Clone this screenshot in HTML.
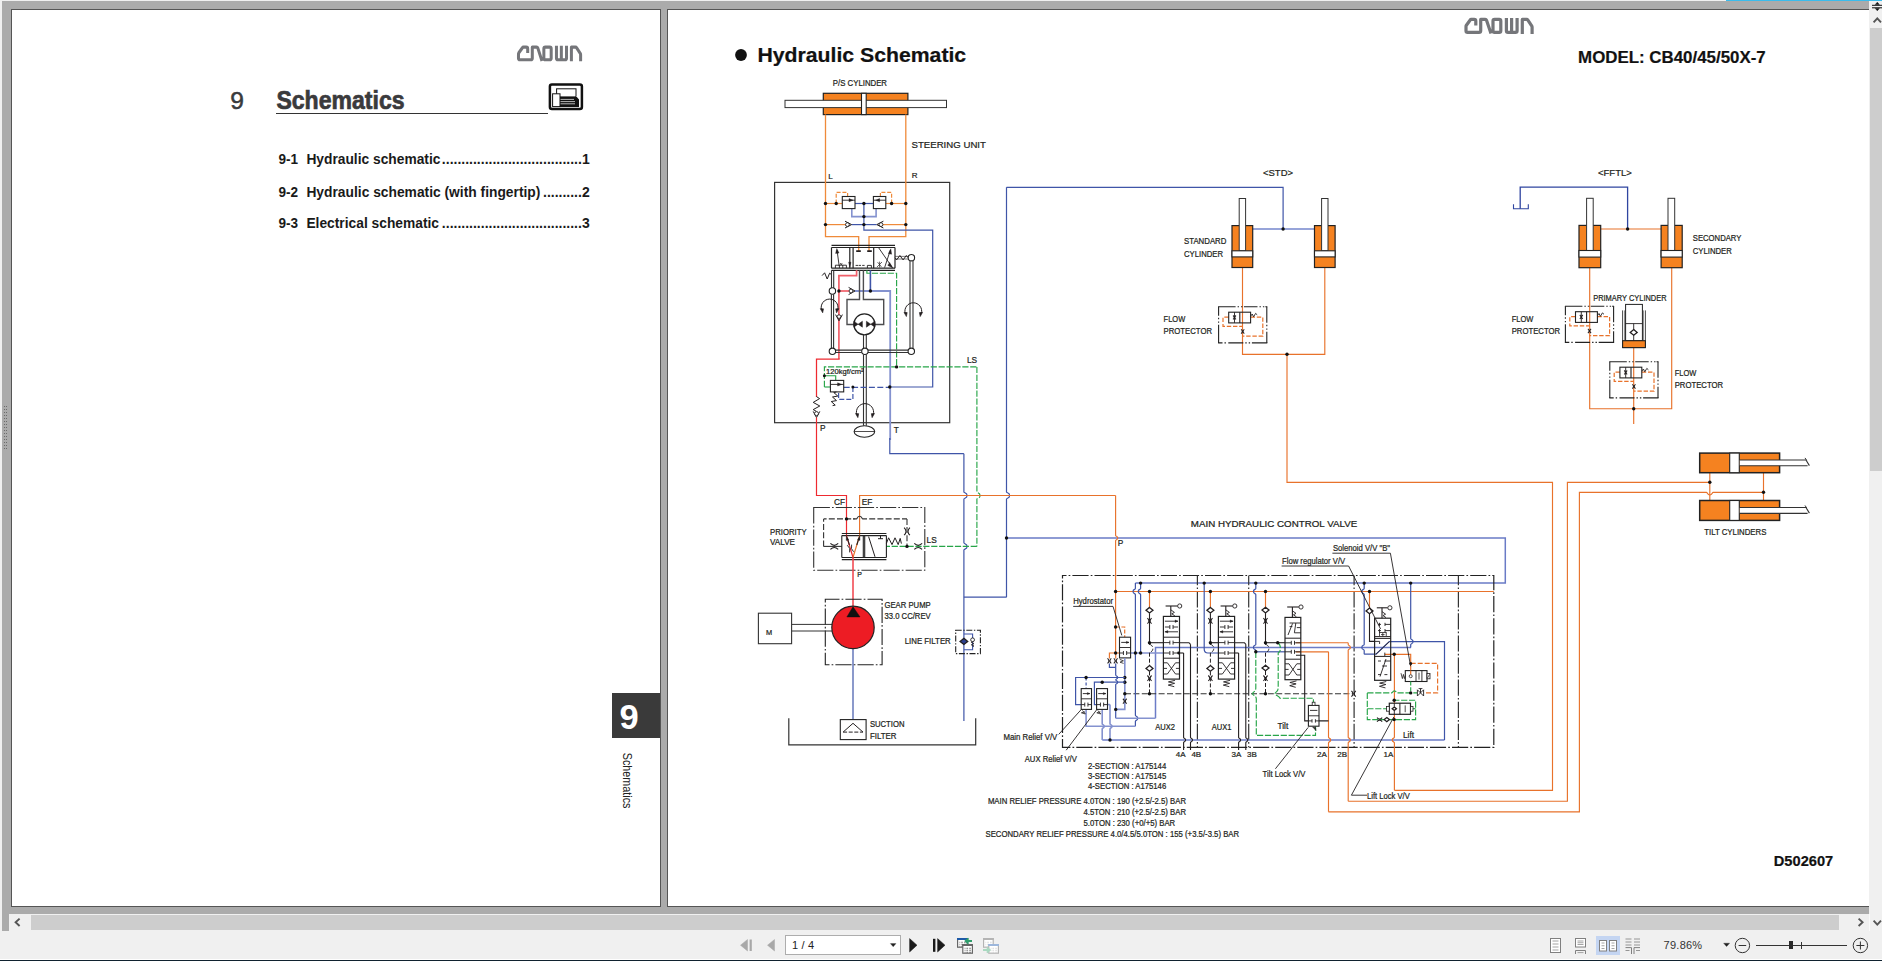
<!DOCTYPE html>
<html>
<head>
<meta charset="utf-8">
<title>Schematics</title>
<style>
html,body{margin:0;padding:0;}
body{width:1882px;height:961px;overflow:hidden;background:#f0f0f0;position:relative;font-family:"Liberation Sans",sans-serif;}
.abs{position:absolute;}
#gray{left:2px;top:1px;width:1867px;height:913px;background:#ababab;}
#grayL{left:2px;top:914px;width:7px;height:17px;background:#ababab;}
#topblue{left:1726px;top:0;width:156px;height:1px;background:#3bbcec;}
#pgL{left:11px;top:9px;width:648px;height:896px;background:#fff;border:1px solid #555;}
#pgR{left:667px;top:9px;width:1202px;height:896px;background:#fff;border:1px solid #555;border-right:none;}
#vsb{left:1869px;top:2px;width:13px;height:929px;background:#f0f0f0;}
#vthumb{left:1870px;top:28px;width:12px;height:443px;background:#cdcdcd;}
#hsb{left:9px;top:914px;width:1860px;height:17px;background:#f0f0f0;}
#hthumb{left:31px;top:915px;width:1808px;height:15px;background:#cdcdcd;}
#botline{left:0;top:959px;width:1882px;height:2px;background:linear-gradient(#ffffff 0,#ffffff 35%,#10222f 60%,#10222f 100%);}
svg text{font-family:"Liberation Sans",sans-serif;}
#sch text{stroke:#231f20;stroke-width:.22px;}
#pagebox{left:785px;top:935px;width:114px;height:18px;background:#fff;border:1px solid #adadad;}
#pagetxt{left:792px;top:938.7px;font-size:11px;color:#222;letter-spacing:0.2px;}
#zoomtxt{left:1663.6px;top:939px;font-size:11px;color:#333;letter-spacing:0.25px;}
#viewhl{left:1596px;top:936px;width:24px;height:19px;background:#c4d5f2;}
</style>
</head>
<body>
<div class="abs" id="gray"></div>
<div class="abs" id="grayL"></div>
<div class="abs" id="topblue"></div>
<div class="abs" id="pgL"></div>
<div class="abs" id="pgR"></div>
<div class="abs" id="vsb"></div>
<div class="abs" id="vthumb"></div>
<div class="abs" id="hsb"></div>
<div class="abs" id="hthumb"></div>
<div class="abs" id="botline"></div>
<div class="abs" id="viewhl"></div>
<div class="abs" id="pagebox"></div>
<div class="abs" id="pagetxt">1 / 4</div>
<div class="abs" id="zoomtxt">79.86%</div>

<!-- chrome icons -->
<svg class="abs" style="left:0;top:0" width="1882" height="961" viewBox="0 0 1882 961" fill="none">
<rect x="4" y="406" width="1" height="1" fill="#6a6a6a"/>
<rect x="6" y="406" width="1" height="1" fill="#6a6a6a"/>
<rect x="4" y="409" width="1" height="1" fill="#6a6a6a"/>
<rect x="6" y="409" width="1" height="1" fill="#6a6a6a"/>
<rect x="4" y="412" width="1" height="1" fill="#6a6a6a"/>
<rect x="6" y="412" width="1" height="1" fill="#6a6a6a"/>
<rect x="4" y="415" width="1" height="1" fill="#6a6a6a"/>
<rect x="6" y="415" width="1" height="1" fill="#6a6a6a"/>
<rect x="4" y="418" width="1" height="1" fill="#6a6a6a"/>
<rect x="6" y="418" width="1" height="1" fill="#6a6a6a"/>
<rect x="4" y="421" width="1" height="1" fill="#6a6a6a"/>
<rect x="6" y="421" width="1" height="1" fill="#6a6a6a"/>
<rect x="4" y="424" width="1" height="1" fill="#6a6a6a"/>
<rect x="6" y="424" width="1" height="1" fill="#6a6a6a"/>
<rect x="4" y="427" width="1" height="1" fill="#6a6a6a"/>
<rect x="6" y="427" width="1" height="1" fill="#6a6a6a"/>
<rect x="4" y="430" width="1" height="1" fill="#6a6a6a"/>
<rect x="6" y="430" width="1" height="1" fill="#6a6a6a"/>
<rect x="4" y="433" width="1" height="1" fill="#6a6a6a"/>
<rect x="6" y="433" width="1" height="1" fill="#6a6a6a"/>
<rect x="4" y="436" width="1" height="1" fill="#6a6a6a"/>
<rect x="6" y="436" width="1" height="1" fill="#6a6a6a"/>
<rect x="4" y="439" width="1" height="1" fill="#6a6a6a"/>
<rect x="6" y="439" width="1" height="1" fill="#6a6a6a"/>
<rect x="4" y="442" width="1" height="1" fill="#6a6a6a"/>
<rect x="6" y="442" width="1" height="1" fill="#6a6a6a"/>
<rect x="4" y="445" width="1" height="1" fill="#6a6a6a"/>
<rect x="6" y="445" width="1" height="1" fill="#6a6a6a"/>
<rect x="4" y="448" width="1" height="1" fill="#6a6a6a"/>
<rect x="6" y="448" width="1" height="1" fill="#6a6a6a"/>
<path d="M19.6 918.6 L15.6 922.3 L19.6 926" stroke="#555" stroke-width="1.9" fill="none"/>
<path d="M1858.6 918.6 L1862.6 922.3 L1858.6 926" stroke="#555" stroke-width="1.9" fill="none"/>
<path d="M1873.6 22.4 L1877.3 18.4 L1881 22.4" stroke="#555" stroke-width="1.9" fill="none"/>
<path d="M1873.6 920.6 L1877.3 924.6 L1881 920.6" stroke="#555" stroke-width="1.9" fill="none"/>
<path d="M1872 5.3 H1882 M1872 7.8 H1882" stroke="#111" stroke-width="1" fill="none"/>
<path d="M1875.3 4.6 L1877.3 2.2 L1879.3 4.6Z" stroke="#111" stroke-width="0.5" fill="#111"/>
<path d="M1875.3 8.4 L1877.3 10.8 L1879.3 8.4Z" stroke="#111" stroke-width="0.5" fill="#111"/>
<rect x="1869" y="914" width="1" height="17" fill="#fafafa"/>
<path d="M747.5 939.5 L740.5 945.2 L747.5 951 Z" stroke="#a8a8a8" stroke-width="0.5" fill="#a8a8a8"/>
<rect x="749.6" y="939.5" width="2.2" height="11.5" fill="#a8a8a8"/>
<path d="M774.5 939.5 L767.5 945.2 L774.5 951 Z" stroke="#a8a8a8" stroke-width="0.5" fill="#a8a8a8"/>
<path d="M909.6 938.6 L917 945.2 L909.6 952 Z" stroke="#1a1a1a" stroke-width="0.5" fill="#1a1a1a"/>
<rect x="933" y="938.8" width="2.4" height="13" fill="#1a1a1a"/>
<path d="M937.6 938.6 L945 945.2 L937.6 952 Z" stroke="#1a1a1a" stroke-width="0.5" fill="#1a1a1a"/>
<path d="M890.4 943.6 L896 943.6 L893.2 946.8Z" stroke="#222" stroke-width="0.3" fill="#222"/>
<rect x="957.6" y="938.6" width="9.6" height="8.6" fill="#fff" stroke="#666" stroke-width="1.2"/>
<rect x="957" y="938" width="10.8" height="2" fill="#1e5aa8"/>
<rect x="959.4" y="941.8" width="0.9" height="0.8" fill="#666"/>
<rect x="961.2" y="941.8" width="1.7" height="0.8" fill="#666"/>
<rect x="964" y="941.8" width="1.7" height="0.8" fill="#666"/>
<rect x="959.4" y="943.8" width="0.9" height="0.8" fill="#666"/>
<rect x="961.2" y="943.8" width="1.7" height="0.8" fill="#666"/>
<rect x="964" y="943.8" width="1.7" height="0.8" fill="#666"/>
<rect x="959.4" y="945.8" width="0.9" height="0.8" fill="#666"/>
<rect x="961.2" y="945.8" width="1.7" height="0.8" fill="#666"/>
<rect x="964" y="945.8" width="1.7" height="0.8" fill="#666"/>
<path d="M972 941 H967 M968.6 938.4 L965.6 941 L968.6 943.6" stroke="#2e9e6b" stroke-width="1.8" fill="none"/>
<rect x="962.8" y="944.6" width="9.6" height="8.6" fill="#fff" stroke="#666" stroke-width="1.2"/>
<rect x="962.2" y="944" width="10.8" height="2" fill="#666"/>
<rect x="964.6" y="947.8" width="0.9" height="0.8" fill="#555"/>
<rect x="966.4" y="947.8" width="1.7" height="0.8" fill="#555"/>
<rect x="969.2" y="947.8" width="1.7" height="0.8" fill="#555"/>
<rect x="964.6" y="949.8" width="0.9" height="0.8" fill="#555"/>
<rect x="966.4" y="949.8" width="1.7" height="0.8" fill="#555"/>
<rect x="969.2" y="949.8" width="1.7" height="0.8" fill="#555"/>
<rect x="964.6" y="951.8" width="0.9" height="0.8" fill="#555"/>
<rect x="966.4" y="951.8" width="1.7" height="0.8" fill="#555"/>
<rect x="969.2" y="951.8" width="1.7" height="0.8" fill="#555"/>
<rect x="983.6" y="938.6" width="9.6" height="8.6" fill="#fff" stroke="#b4b4b4" stroke-width="1.2"/>
<rect x="983" y="938" width="10.8" height="2" fill="#b4b4b4"/>
<rect x="985.4" y="941.8" width="0.9" height="0.8" fill="#d0d0d0"/>
<rect x="987.2" y="941.8" width="1.7" height="0.8" fill="#d0d0d0"/>
<rect x="990" y="941.8" width="1.7" height="0.8" fill="#d0d0d0"/>
<rect x="985.4" y="943.8" width="0.9" height="0.8" fill="#d0d0d0"/>
<rect x="987.2" y="943.8" width="1.7" height="0.8" fill="#d0d0d0"/>
<rect x="990" y="943.8" width="1.7" height="0.8" fill="#d0d0d0"/>
<rect x="985.4" y="945.8" width="0.9" height="0.8" fill="#d0d0d0"/>
<rect x="987.2" y="945.8" width="1.7" height="0.8" fill="#d0d0d0"/>
<rect x="990" y="945.8" width="1.7" height="0.8" fill="#d0d0d0"/>
<rect x="988.8" y="944.6" width="9.6" height="8.6" fill="#fff" stroke="#b4b4b4" stroke-width="1.2"/>
<rect x="988.2" y="944" width="10.8" height="2" fill="#9db7dc"/>
<rect x="990.6" y="947.8" width="0.9" height="0.8" fill="#d0d0d0"/>
<rect x="992.4" y="947.8" width="1.7" height="0.8" fill="#d0d0d0"/>
<rect x="995.2" y="947.8" width="1.7" height="0.8" fill="#d0d0d0"/>
<rect x="990.6" y="949.8" width="0.9" height="0.8" fill="#d0d0d0"/>
<rect x="992.4" y="949.8" width="1.7" height="0.8" fill="#d0d0d0"/>
<rect x="995.2" y="949.8" width="1.7" height="0.8" fill="#d0d0d0"/>
<rect x="990.6" y="951.8" width="0.9" height="0.8" fill="#d0d0d0"/>
<rect x="992.4" y="951.8" width="1.7" height="0.8" fill="#d0d0d0"/>
<rect x="995.2" y="951.8" width="1.7" height="0.8" fill="#d0d0d0"/>
<path d="M983 950 H988.6 M986.8 947.4 L989.8 950 L986.8 952.6" stroke="#a9d8c0" stroke-width="1.8" fill="none"/>
<rect x="1550.5" y="938.5" width="10" height="14" fill="#fff" stroke="#808080" stroke-width="1"/>
<line x1="1552.5" y1="941" x2="1558.5" y2="941" stroke="#9a9a9a" stroke-width="0.9"/>
<line x1="1552.5" y1="944" x2="1558.5" y2="944" stroke="#9a9a9a" stroke-width="0.9"/>
<line x1="1552.5" y1="947" x2="1558.5" y2="947" stroke="#9a9a9a" stroke-width="0.9"/>
<line x1="1552.5" y1="950" x2="1558.5" y2="950" stroke="#9a9a9a" stroke-width="0.9"/>
<rect x="1575.5" y="938.5" width="10" height="8.5" fill="#fff" stroke="#808080" stroke-width="1"/>
<line x1="1577.5" y1="941" x2="1583.5" y2="941" stroke="#9a9a9a" stroke-width="0.9"/>
<line x1="1577.5" y1="942.75" x2="1583.5" y2="942.75" stroke="#9a9a9a" stroke-width="0.9"/>
<line x1="1577.5" y1="944.5" x2="1583.5" y2="944.5" stroke="#9a9a9a" stroke-width="0.9"/>
<path d="M1575.5 954 V950.5 H1585.5 V954" stroke="#808080" stroke-width="1" fill="none"/>
<path d="M1577.5 952.6 H1583.5" stroke="#9a9a9a" stroke-width="0.9" fill="none"/>
<rect x="1599.5" y="940.5" width="7" height="10.5" fill="#fff" stroke="#808080" stroke-width="1"/>
<line x1="1601.5" y1="943" x2="1604.5" y2="943" stroke="#9a9a9a" stroke-width="0.9"/>
<line x1="1601.5" y1="945.75" x2="1604.5" y2="945.75" stroke="#9a9a9a" stroke-width="0.9"/>
<line x1="1601.5" y1="948.5" x2="1604.5" y2="948.5" stroke="#9a9a9a" stroke-width="0.9"/>
<rect x="1609.5" y="940.5" width="7" height="10.5" fill="#fff" stroke="#808080" stroke-width="1"/>
<line x1="1611.5" y1="943" x2="1614.5" y2="943" stroke="#9a9a9a" stroke-width="0.9"/>
<line x1="1611.5" y1="945.75" x2="1614.5" y2="945.75" stroke="#9a9a9a" stroke-width="0.9"/>
<line x1="1611.5" y1="948.5" x2="1614.5" y2="948.5" stroke="#9a9a9a" stroke-width="0.9"/>
<path d="M1625.5 939 H1631.5 M1625.5 942 H1631.5 M1625.5 945 H1631.5" stroke="#8a8a8a" stroke-width="0.9" fill="none"/>
<path d="M1634 939 H1640 M1634 942 H1640 M1634 945 H1640" stroke="#8a8a8a" stroke-width="0.9" fill="none"/>
<path d="M1625.5 947.6 H1631.5 V954 M1640 947.6 H1634 V954" stroke="#808080" stroke-width="1" fill="none"/>
<path d="M1625.5 950.5 H1629.5 M1636 950.5 H1640" stroke="#8a8a8a" stroke-width="0.9" fill="none"/>
<path d="M1723.6 943.2 L1729.6 943.2 L1726.6 946.6Z" stroke="#222" stroke-width="0.3" fill="#222"/>
<circle cx="1742.4" cy="945.5" r="7.2" fill="#f0f0f0" stroke="#333" stroke-width="1"/>
<path d="M1738.6 945.5 H1746.2" stroke="#333" stroke-width="1" fill="none"/>
<circle cx="1860.4" cy="945.5" r="7.2" fill="#f0f0f0" stroke="#333" stroke-width="1"/>
<path d="M1856.4 945.5 H1864.4 M1860.4 941.5 V949.5" stroke="#333" stroke-width="1" fill="none"/>
<path d="M1756 945.5 H1847" stroke="#333" stroke-width="1.2" fill="none"/>
<rect x="1789" y="941" width="4" height="8" fill="#2a2a2a"/>
<path d="M1801.5 942 V949" stroke="#333" stroke-width="1" fill="none"/>
</svg>

<!-- left page content -->
<svg class="abs" style="left:0;top:0" width="1882" height="961" viewBox="0 0 1882 961" fill="none">
<g transform="translate(516.6,45.8) scale(0.94,0.97)"><path d="M11.8 7.4 V3 Q11.8 1.4 10.2 1.4 H7.2 Q6.6 1.4 6.2 2 L2.4 7.2 Q2 7.8 2 8.6 V12.8 Q2 14.4 3.6 14.4 H15 Q16.7 14.4 16.7 12.8 V1.4 H21.2 Q22.2 1.4 22.6 2.4 L27 15.6 M30.6 1.4 H35.2 Q36.8 1.4 36.8 3 V12.8 Q36.8 14.4 35.2 14.4 H30.6 Q29 14.4 29 12.8 V3 Q29 1.4 30.6 1.4 Z M42.4 0 V12.8 Q42.4 14.4 44 14.4 H51.5 Q53.1 14.4 53.1 12.8 V0 M47.6 0 V14.4 M58.3 15.9 V1.4 H62.6 Q63.4 1.4 63.9 2.1 L67.7 7.9 Q68.1 8.5 68.1 9.2 V15.9" stroke="#75767a" stroke-width="3.2" fill="none" stroke-linejoin="round"/></g>
<g transform="translate(1464,18) scale(1,1)"><path d="M11.8 7.4 V3 Q11.8 1.4 10.2 1.4 H7.2 Q6.6 1.4 6.2 2 L2.4 7.2 Q2 7.8 2 8.6 V12.8 Q2 14.4 3.6 14.4 H15 Q16.7 14.4 16.7 12.8 V1.4 H21.2 Q22.2 1.4 22.6 2.4 L27 15.6 M30.6 1.4 H35.2 Q36.8 1.4 36.8 3 V12.8 Q36.8 14.4 35.2 14.4 H30.6 Q29 14.4 29 12.8 V3 Q29 1.4 30.6 1.4 Z M42.4 0 V12.8 Q42.4 14.4 44 14.4 H51.5 Q53.1 14.4 53.1 12.8 V0 M47.6 0 V14.4 M58.3 15.9 V1.4 H62.6 Q63.4 1.4 63.9 2.1 L67.7 7.9 Q68.1 8.5 68.1 9.2 V15.9" stroke="#75767a" stroke-width="3.2" fill="none" stroke-linejoin="round"/></g>
<text x="230.3" y="108.8" font-size="24.6" fill="#3a3a3c" stroke="#3a3a3c" stroke-width="0.5">9</text>
<text x="276.4" y="108.8" font-size="26" fill="#3a3a3c" textLength="128.2" lengthAdjust="spacingAndGlyphs" font-weight="bold" stroke="#3a3a3c" stroke-width="0.7">Schematics</text>
<path d="M276 113.5 H548" stroke="#333" stroke-width="1.1" fill="none"/>
<rect x="549.9" y="84.5" width="32" height="24.4" rx="2" ry="2" fill="#fff" stroke="#111" stroke-width="2.5"/>
<rect x="556.6" y="88.8" width="19.4" height="12" fill="#fff" stroke="#111" stroke-width="1"/>
<rect x="559" y="96.4" width="20" height="10.6" fill="#111"/>
<path d="M560 99.4 H574 M560 101.6 H575 M560 103.8 H575" stroke="#fff" stroke-width="0.7"/>
<path d="M573 96 L576 96 L579 99.4 L579 96 Z" fill="#fff"/>
<rect x="552.6" y="93.8" width="7.4" height="12.8" fill="#fff" stroke="#111" stroke-width="1"/>
<text x="278.5" y="163.9" font-size="14" fill="#1a1a1a" stroke="none" textLength="19.6" lengthAdjust="spacingAndGlyphs" font-weight="bold" >9-1</text>
<text x="306.4" y="163.9" font-size="14" fill="#1a1a1a" stroke="none" textLength="134" lengthAdjust="spacingAndGlyphs" font-weight="bold" >Hydraulic schematic</text>
<text x="589.7" y="163.9" font-size="14" fill="#1a1a1a" stroke="none" font-weight="bold" text-anchor="end" >....................................1</text>
<text x="278.5" y="197.2" font-size="14" fill="#1a1a1a" stroke="none" textLength="19.6" lengthAdjust="spacingAndGlyphs" font-weight="bold" >9-2</text>
<text x="306.4" y="197.2" font-size="14" fill="#1a1a1a" stroke="none" textLength="234" lengthAdjust="spacingAndGlyphs" font-weight="bold" >Hydraulic schematic (with fingertip)</text>
<text x="589.7" y="197.2" font-size="14" fill="#1a1a1a" stroke="none" font-weight="bold" text-anchor="end" >..........2</text>
<text x="278.5" y="227.6" font-size="14" fill="#1a1a1a" stroke="none" textLength="19.6" lengthAdjust="spacingAndGlyphs" font-weight="bold" >9-3</text>
<text x="306.4" y="227.6" font-size="14" fill="#1a1a1a" stroke="none" textLength="132.6" lengthAdjust="spacingAndGlyphs" font-weight="bold" >Electrical schematic</text>
<text x="589.7" y="227.6" font-size="14" fill="#1a1a1a" stroke="none" font-weight="bold" text-anchor="end" >....................................3</text>
<rect x="612" y="693" width="48" height="45" fill="#3a3a3a"/>
<text x="619.4" y="729.2" font-size="34.5" fill="#fff" stroke="none" font-weight="bold" >9</text>
<g transform="translate(622.6,752.8) rotate(90)"><text x="0" y="0" font-size="12" fill="#222" textLength="55.6" lengthAdjust="spacingAndGlyphs">Schematics</text></g>
</svg>

<!-- right page schematic -->
<svg id="sch" class="abs" style="left:0;top:0" width="1882" height="961" viewBox="0 0 1882 961" fill="none" stroke-linecap="butt" stroke-linejoin="miter">
<circle cx="741" cy="55" r="5.9" fill="#111"/>
<text x="757.4" y="61.9" font-size="19.8" fill="#111" stroke="none" textLength="208.8" lengthAdjust="spacingAndGlyphs" font-weight="bold" >Hydraulic Schematic</text>
<text x="1578.1" y="63" font-size="17" fill="#111" stroke="none" textLength="187.6" lengthAdjust="spacingAndGlyphs" font-weight="bold" >MODEL: CB40/45/50X-7</text>
<text x="1773.8" y="865.8" font-size="14.5" fill="#111" stroke="none" textLength="59.4" lengthAdjust="spacingAndGlyphs" font-weight="bold" >D502607</text>
<text x="832.8" y="85.9" font-size="8.3" fill="#231f20" stroke="none" textLength="54.2" lengthAdjust="spacingAndGlyphs" >P/S CYLINDER</text>
<rect x="823.3" y="93.3" width="84.6" height="21.3" fill="#f58220" stroke="#222" stroke-width="1.2"/>
<rect x="785" y="100.3" width="161.5" height="7.3" fill="#fff" stroke="#333" stroke-width="1"/>
<rect x="861.5" y="93.3" width="4.7" height="21.3" fill="#fff" stroke="#222" stroke-width="1.1"/>
<text x="911.5" y="148.2" font-size="9.6" fill="#231f20" stroke="none" textLength="74.4" lengthAdjust="spacingAndGlyphs" >STEERING UNIT</text>
<text x="828.2" y="179" font-size="8" fill="#231f20" stroke="none" >L</text>
<text x="911.7" y="178.2" font-size="8" fill="#231f20" stroke="none" >R</text>
<rect x="774.6" y="182.4" width="175.1" height="240.3" fill="none" stroke="#333" stroke-width="1.2"/>
<polyline points="825.5,114.6 825.5,236.6 858.7,236.6 858.7,250.9" stroke="#ef8a3a" stroke-width="1.3" />
<polyline points="905.8,114.6 905.8,236.6 869,236.6 869,250.9" stroke="#ef8a3a" stroke-width="1.3" />
<polyline points="825.5,203.5 842.3,203.5" stroke="#ef8a3a" stroke-width="1.2" />
<polyline points="885.8,203.5 905.8,203.5" stroke="#ef8a3a" stroke-width="1.2" />
<polyline points="855,203.5 873.4,203.5" stroke="#3f55a8" stroke-width="1.2" />
<polyline points="836.2,203.5 836.2,192.3 847.6,192.3 847.6,196.5" stroke="#ef8a3a" stroke-width="1.2" stroke-dasharray="4 1.8" />
<polyline points="891.6,203.5 891.6,192.3 880.4,192.3 880.4,196.5" stroke="#ef8a3a" stroke-width="1.2" stroke-dasharray="4 1.8" />
<polyline points="851.8,208.6 851.8,216.6 876.1,216.6 876.1,208.6" stroke="#8492cf" stroke-width="1.6" />
<polyline points="863.9,203.5 863.9,230.2 932.7,230.2 932.7,387 889.8,387" stroke="#3f55a8" stroke-width="1.2" />
<rect x="842.3" y="196.5" width="12.7" height="12.1" fill="#fff" stroke="#222" stroke-width="1.1"/>
<rect x="873.4" y="196.5" width="12.4" height="12.1" fill="#fff" stroke="#222" stroke-width="1.1"/>
<polyline points="842.3,200.2 855,200.2" stroke="#231f20" stroke-width="0.9" />
<polyline points="873.4,200.2 885.8,200.2" stroke="#231f20" stroke-width="0.9" />
<path d="M849 198.6 L853 200.2 L849 201.8Z" stroke="#231f20" stroke-width="0.4" fill="#231f20"/>
<path d="M879.6 198.6 L875.6 200.2 L879.6 201.8Z" stroke="#231f20" stroke-width="0.4" fill="#231f20"/>
<circle cx="825.5" cy="203.5" r="1.7" fill="#111" stroke="none"/>
<circle cx="836.2" cy="203.5" r="1.7" fill="#111" stroke="none"/>
<circle cx="863.9" cy="203.5" r="1.7" fill="#111" stroke="none"/>
<circle cx="891.6" cy="203.5" r="1.7" fill="#111" stroke="none"/>
<circle cx="905.8" cy="203.5" r="1.7" fill="#111" stroke="none"/>
<circle cx="863.9" cy="216.6" r="1.7" fill="#111" stroke="none"/>
<polyline points="825.5,224.6 846,224.6" stroke="#ef8a3a" stroke-width="1.2" />
<polyline points="883,224.6 905.8,224.6" stroke="#ef8a3a" stroke-width="1.2" />
<polyline points="851.8,224.6 876.6,224.6" stroke="#3f55a8" stroke-width="1.2" />
<path d="M845 221.2 L851.6 224.6 L845 228" stroke="#231f20" stroke-width="1" fill="none"/>
<circle cx="847.4" cy="224.6" r="1.9" fill="#fff" stroke="#231f20" stroke-width="0.9"/>
<path d="M883.4 221.2 L876.8 224.6 L883.4 228" stroke="#231f20" stroke-width="1" fill="none"/>
<circle cx="881" cy="224.6" r="1.9" fill="#fff" stroke="#231f20" stroke-width="0.9"/>
<circle cx="825.5" cy="224.6" r="1.7" fill="#111" stroke="none"/>
<circle cx="863.9" cy="224.6" r="1.7" fill="#111" stroke="none"/>
<circle cx="905.8" cy="224.6" r="1.7" fill="#111" stroke="none"/>
<path d="M831.5 245.4 H895 M831.5 247.5 H895 M831.5 268.2 H895 M831.5 270.3 H895" stroke="#222" stroke-width="1.2" fill="none"/>
<path d="M831.5 247.5 V268.2 M895 247.5 V268.2 M849.8 247.5 V268.2 M853.1 247.5 V268.2 M873.7 247.5 V268.2" stroke="#222" stroke-width="1.2" fill="none"/>
<polyline points="839.2,266 837,250" stroke="#231f20" stroke-width="0.9" />
<path d="M835.6 253.4 L836.8 248.6 L839 253Z" stroke="#231f20" stroke-width="0.4" fill="#231f20"/>
<path d="M848.6 262.2 L849.8 267 L851 262.2Z" stroke="#231f20" stroke-width="0.4" fill="#231f20"/>
<path d="M835.4 268 V265.2 H846.4 V268 M839.4 265.2 V268 M842.8 265.2 V268" stroke="#231f20" stroke-width="0.9" fill="none"/>
<path d="M840 263 L842.4 265.4 M842.4 263 L840 265.4" stroke="#231f20" stroke-width="0.7" fill="none"/>
<path d="M856.2 251.1 H860.8 M867.2 251.1 H871.8" stroke="#231f20" stroke-width="1.6" fill="none"/>
<path d="M855.6 265.4 H858 M858.6 265.4 H861 M862.2 265.4 H864.6 M867.4 265.4 H871.4 V268 M867.4 265.4 V268" stroke="#231f20" stroke-width="0.9" fill="none"/>
<polyline points="878.8,248 892.4,267.6" stroke="#231f20" stroke-width="0.9" />
<polyline points="890.4,250 884.6,267.6" stroke="#231f20" stroke-width="0.9" />
<path d="M888.4 253.6 L890.8 248.8 L891.6 254.2Z" stroke="#231f20" stroke-width="0.4" fill="#231f20"/>
<path d="M889.6 262.4 L892.6 267.8 L887.8 265.4Z" stroke="#231f20" stroke-width="0.4" fill="#231f20"/>
<path d="M877 267 L882 262 M877.6 262.2 L881.4 266.8 M879.6 261.6 V267.4" stroke="#231f20" stroke-width="0.7" fill="none"/>
<polyline points="895,257.7 896.62,259.9 899.88,255.5 903.12,259.9 906.38,255.5 908,257.7" stroke="#231f20" stroke-width="1" />
<path d="M895 256.4 H908 M895 259 H908" stroke="#231f20" stroke-width="0.6" fill="none"/>
<circle cx="911.4" cy="257.7" r="3.2" fill="#fff" stroke="#222" stroke-width="1.1"/>
<path d="M910 261 V348.2 M913 261 V348.2" stroke="#333" stroke-width="1.1" fill="none"/>
<polyline points="822.1,275.6 824.6,272.8 827.2,279 829.6,273.2 831.5,274.6" stroke="#231f20" stroke-width="1" />
<path d="M831.5 270.3 V288 M833.7 270.3 V288 M831.4 294.2 V348.2 M833.6 294.2 V348.2" stroke="#333" stroke-width="1.1" fill="none"/>
<polyline points="856.6,270.3 856.6,275.7 838.9,275.7 838.9,359.1" stroke="#f0606a" stroke-width="1.7" />
<polyline points="839.7,359.1 816.5,359.1 816.5,397" stroke="#ee2a30" stroke-width="1.25" />
<polyline points="838.9,291 849,291" stroke="#f0606a" stroke-width="1.7" />
<polyline points="854.8,291 890.2,291 890.2,440" stroke="#8492cf" stroke-width="1.8" />
<polyline points="870.4,270.3 870.4,291" stroke="#3f55a8" stroke-width="1.6" />
<path d="M848.6 287.4 L855 291 L848.6 294.6" stroke="#231f20" stroke-width="1" fill="none"/>
<circle cx="851" cy="291" r="1.9" fill="#fff" stroke="#231f20" stroke-width="0.9"/>
<polyline points="866.9,270.3 866.9,273.2 896.6,273.2 896.6,366.9" stroke="#27a548" stroke-width="1.15" stroke-dasharray="6.2 1.7" />
<polyline points="859.5,270.3 859.5,299.5 847,299.5 847,324.5 854,324.5" stroke="#4d4d4f" stroke-width="1.4" />
<polyline points="863.4,270.3 863.4,299.5 883.7,299.5 883.7,324.5 874.8,324.5" stroke="#4d4d4f" stroke-width="1.4" />
<circle cx="838.9" cy="291" r="1.7" fill="#111" stroke="none"/>
<circle cx="870.4" cy="291" r="1.7" fill="#111" stroke="none"/>
<circle cx="832.4" cy="291" r="3.2" fill="#fff" stroke="#222" stroke-width="1.1"/>
<path d="M835.6 314.6 L839 320.8 L842.4 314.6" stroke="#231f20" stroke-width="1" fill="none"/>
<circle cx="839" cy="316.6" r="1.8" fill="#fff" stroke="#231f20" stroke-width="0.9"/>
<circle cx="864.4" cy="324.3" r="10.5" fill="#fff" stroke="#222" stroke-width="1.3"/>
<path d="M853.8 321.2 L862.4 327.2 V321.2 L853.8 327.2Z M866.4 321.2 L875 327.2 V321.2 L866.4 327.2Z" stroke="#231f20" stroke-width="0.5" fill="#231f20"/>
<path d="M863.5 334.8 V348.2 M866.3 334.8 V348.2 M863.5 354.4 V425.8 M866.3 354.4 V425.8" stroke="#333" stroke-width="1.1" fill="none"/>
<path d="M835.4 350.1 H861.8 M835.4 352.5 H861.8 M868 350.1 H908 M868 352.5 H908" stroke="#333" stroke-width="1.1" fill="none"/>
<circle cx="832.4" cy="351.3" r="3.2" fill="#fff" stroke="#222" stroke-width="1.1"/>
<circle cx="864.9" cy="351.3" r="3.2" fill="#fff" stroke="#222" stroke-width="1.1"/>
<circle cx="911.3" cy="351.3" r="3.2" fill="#fff" stroke="#222" stroke-width="1.1"/>
<ellipse cx="864.4" cy="431.5" rx="10.3" ry="5.8" fill="#fff" stroke="#222" stroke-width="1.1"/>
<path d="M854.2 431.5 H874.6" stroke="#231f20" stroke-width="0.8" fill="none"/>
<path d="M821.49 309.67 A8.4 8.4 0 1 1 837.71 309.67" stroke="#231f20" stroke-width="1" fill="none"/>
<path d="M822.69 312.87 l-2.4 -4.2 l3.2 0.2Z" stroke="#231f20" stroke-width="0.6" fill="#231f20"/>
<path d="M836.51 312.87 l2.4 -4.2 l-3.2 0.2Z" stroke="#231f20" stroke-width="0.6" fill="#231f20"/>
<path d="M905.19 313.37 A8.4 8.4 0 1 1 921.41 313.37" stroke="#231f20" stroke-width="1" fill="none"/>
<path d="M906.39 316.57 l-2.4 -4.2 l3.2 0.2Z" stroke="#231f20" stroke-width="0.6" fill="#231f20"/>
<path d="M920.21 316.57 l2.4 -4.2 l-3.2 0.2Z" stroke="#231f20" stroke-width="0.6" fill="#231f20"/>
<path d="M856.69 414.43 A8.6 8.6 0 1 1 873.31 414.43" stroke="#231f20" stroke-width="1" fill="none"/>
<path d="M857.89 417.63 l-2.4 -4.2 l3.2 0.2Z" stroke="#231f20" stroke-width="0.6" fill="#231f20"/>
<path d="M872.11 417.63 l2.4 -4.2 l-3.2 0.2Z" stroke="#231f20" stroke-width="0.6" fill="#231f20"/>
<polyline points="824.4,387 824.4,366.9 976.9,366.9" stroke="#27a548" stroke-width="1.15" stroke-dasharray="6.2 1.7" />
<polyline points="824.4,387 830.4,387" stroke="#27a548" stroke-width="1.15" />
<polyline points="824.4,375.7 835.7,375.7 835.7,380.4" stroke="#27a548" stroke-width="1.15" />
<circle cx="896.6" cy="366.9" r="1.7" fill="#111" stroke="none"/>
<circle cx="824.4" cy="375.7" r="1.5" fill="#111" stroke="none"/>
<text x="826" y="374" font-size="7.4" fill="#231f20" stroke="none" textLength="37.6" lengthAdjust="spacingAndGlyphs" >120kgf/cm²</text>
<text x="966.9" y="362.9" font-size="8.3" fill="#231f20" stroke="none" >LS</text>
<polyline points="843.7,387.4 889.8,387.4" stroke="#3f55a8" stroke-width="1.2" stroke-dasharray="6 2.4" />
<polyline points="852.9,387 852.9,399.4 838.6,399.4 838.6,391.9" stroke="#3f55a8" stroke-width="1.2" stroke-dasharray="5 2" />
<rect x="830.4" y="380.4" width="13.3" height="11.5" fill="#fff" stroke="#222" stroke-width="1.1"/>
<polyline points="830.4,384.4 843.7,384.4" stroke="#231f20" stroke-width="0.9" />
<path d="M837.6 382.8 L841.6 384.4 L837.6 386Z" stroke="#231f20" stroke-width="0.4" fill="#231f20"/>
<circle cx="852.9" cy="387" r="1.5" fill="#111" stroke="none"/>
<circle cx="889.8" cy="387" r="1.7" fill="#111" stroke="none"/>
<polyline points="836.4,392 833.77,392.49 837.76,396.05 832.51,397.02 836.49,400.58 831.24,401.55 835.23,405.11 832.6,405.6" stroke="#231f20" stroke-width="1" />
<polyline points="816.5,396.6 819.6,398.6 813.2,402.4 819.8,406 813.2,409.6 816.5,411.4" stroke="#231f20" stroke-width="1" />
<path d="M813.2 411.4 L816.5 417.6 L819.8 411.4" stroke="#231f20" stroke-width="1" fill="none"/>
<circle cx="816.5" cy="413.6" r="2" fill="#fff" stroke="#231f20" stroke-width="0.9"/>
<text x="820" y="430.6" font-size="8.3" fill="#231f20" stroke="none" >P</text>
<text x="893.7" y="432.8" font-size="8.3" fill="#231f20" stroke="none" >T</text>
<polyline points="816.5,417.4 816.5,495.5 846.5,495.5 846.5,535.6" stroke="#ee2a30" stroke-width="1.2" />
<polyline points="889.8,438 889.8,453.7 963.9,453.7" stroke="#3f55a8" stroke-width="1.2" />
<path d="M963.9 453.7 L963.9 491.9 C963.9 493.1 967.1 492.5 967.1 495.5 C967.1 498.5 963.9 497.9 963.9 499.1 L963.9 542.8 C963.9 544 967.1 543.4 967.1 546.4 C967.1 549.4 963.9 548.8 963.9 550 L963.9 721" stroke="#3f55a8" stroke-width="1.2" fill="none"/>
<path d="M976.9 366.9 L976.9 491.9 C976.9 493.1 980.1 492.5 980.1 495.5 C980.1 498.5 976.9 497.9 976.9 499.1 L976.9 546.4" stroke="#27a548" stroke-width="1.15" fill="none" stroke-dasharray="6.2 1.7"/>
<polyline points="976.9,546.4 886.4,546.4" stroke="#27a548" stroke-width="1.15" stroke-dasharray="6.2 1.7" />
<polyline points="1283.1,229 1283.1,187.3 1006.5,187.3" stroke="#3f55a8" stroke-width="1.2" />
<path d="M1006.5 187.3 L1006.5 491.9 C1006.5 493.1 1009.7 492.5 1009.7 495.5 C1009.7 498.5 1006.5 497.9 1006.5 499.1 L1006.5 597.2" stroke="#3f55a8" stroke-width="1.2" fill="none"/>
<polyline points="1006.5,597.2 963.9,597.2" stroke="#3f55a8" stroke-width="1.2" />
<polyline points="1006.5,538 1505.3,538 1505.3,583.1 1135.4,583.1" stroke="#6a7bc6" stroke-width="1.5" />
<circle cx="1006.5" cy="538" r="1.7" fill="#111" stroke="none"/>
<polyline points="859.6,535.5 859.6,495.5 1115.6,495.5" stroke="#e8722b" stroke-width="1.15" />
<path d="M1115.6 495.5 L1115.6 535.4 C1115.6 536.6 1117.8 536 1117.8 538 C1117.8 540 1115.6 539.4 1115.6 540.6 L1115.6 653.6" stroke="#e8722b" stroke-width="1.15" fill="none"/>
<text x="833.9" y="505.2" font-size="8.3" fill="#231f20" stroke="none" >CF</text>
<text x="861.8" y="505.2" font-size="8.3" fill="#231f20" stroke="none" >EF</text>
<text x="1117.7" y="545.6" font-size="8.3" fill="#231f20" stroke="none" >P</text>
<rect x="813.7" y="507.5" width="111.1" height="62.7" fill="none" stroke="#333" stroke-width="1.1" stroke-dasharray="16.2 2.1 1.7 2.1" stroke-dashoffset="0"/>
<polyline points="823.6,546.4 823.6,518.9" stroke="#333" stroke-width="1.1" stroke-dasharray="6 2.2" />
<polyline points="823.6,518.9 854.6,518.9" stroke="#333" stroke-width="1.1" stroke-dasharray="6 2.2" stroke-dashoffset="3" />
<path d="M853 518.9 H856.4 C857.4 518.9 857.2 516.2 859.6 516.2 C862 516.2 861.8 518.9 862.8 518.9 H865" stroke="#333" stroke-width="1.1" fill="none"/>
<polyline points="865,518.9 907,518.9" stroke="#333" stroke-width="1.1" stroke-dasharray="6 2.2" stroke-dashoffset="4" />
<polyline points="907,518.9 907,546.4" stroke="#333" stroke-width="1.1" stroke-dasharray="6 2.2" />
<polyline points="823.6,546.4 841.8,546.4" stroke="#333" stroke-width="1.1" />
<path d="M830.4 543.4 Q834.3 547.3 838.2 543.4 M830.4 549.4 Q834.3 545.5 838.2 549.4" stroke="#231f20" stroke-width="1.1" fill="none"/>
<path d="M904.1 527.63 Q907.9 531.4 904.1 535.17 M909.9 527.63 Q906.1 531.4 909.9 535.17" stroke="#231f20" stroke-width="1.1" fill="none"/>
<path d="M914.3 543.4 Q918.2 547.3 922.1 543.4 M914.3 549.4 Q918.2 545.5 922.1 549.4" stroke="#231f20" stroke-width="1.1" fill="none"/>
<circle cx="846.5" cy="518.9" r="1.7" fill="#111" stroke="none"/>
<circle cx="907" cy="546.4" r="1.7" fill="#111" stroke="none"/>
<path d="M841.8 533.5 H886.4 M841.8 535.6 H886.4 M841.8 557.5 H886.4 M841.8 559.6 H886.4 M841.8 535.6 V557.5 M886.4 535.6 V557.5 M863.3 535.6 V557.5 M864.7 535.6 V557.5" stroke="#222" stroke-width="1.1" fill="none"/>
<polyline points="846.5,535.6 853,557.5" stroke="#ee2a30" stroke-width="1.2" />
<polyline points="859.6,535.6 853,557.5" stroke="#e8722b" stroke-width="1.2" />
<polyline points="847.4,538.4 849.4,545" stroke="#231f20" stroke-width="1.1" />
<polyline points="858.8,538.4 856.8,545" stroke="#231f20" stroke-width="1.1" />
<path d="M846.4 535.8 l2.2 4 l-2.4 0.6Z M859.8 535.8 l-2.2 4 l2.4 0.6Z" stroke="#231f20" stroke-width="0.4" fill="#231f20"/>
<path d="M847.2 545.2 Q851 548 849.6 552.4 M851.6 544.6 Q850.4 549 853.6 551.8" stroke="#231f20" stroke-width="0.9" fill="none"/>
<polyline points="868.6,536.6 875,556.8" stroke="#231f20" stroke-width="1" />
<path d="M878 538.7 H883 M880.5 536 V538.7" stroke="#231f20" stroke-width="1" fill="none"/>
<polyline points="886.4,543.4 888.6,537.8 892,544.6 895,537.8 898.2,544.6 900.2,538.4 901.4,543.6" stroke="#231f20" stroke-width="1" />
<text x="926.6" y="542.8" font-size="8.3" fill="#231f20" stroke="none" >LS</text>
<text x="770" y="535.2" font-size="8.4" fill="#231f20" stroke="none" textLength="36.6" lengthAdjust="spacingAndGlyphs" >PRIORITY</text>
<text x="770" y="545.2" font-size="8.4" fill="#231f20" stroke="none" textLength="25" lengthAdjust="spacingAndGlyphs" >VALVE</text>
<text x="857.2" y="576.6" font-size="7" fill="#231f20" stroke="none" >P</text>
<polyline points="853,557.5 853,606.4" stroke="#f0404a" stroke-width="1.5" />
<rect x="825.3" y="599.3" width="56.8" height="65.4" fill="none" stroke="#222" stroke-width="1.1" stroke-dasharray="16.2 2.1 1.7 2.1" stroke-dashoffset="2"/>
<polyline points="853,648 853,719.6" stroke="#3f55a8" stroke-width="1.2" />
<path d="M791.6 624.4 H832.6 M791.6 631 H832.6" stroke="#333" stroke-width="1" fill="none"/>
<circle cx="853" cy="627.4" r="21.2" fill="#ed1c24" stroke="#222" stroke-width="1.2"/>
<path d="M853 606.8 L846.9 616.9 L860 616.9Z" stroke="#111" stroke-width="0.5" fill="#111"/>
<rect x="758.4" y="613.2" width="33.2" height="30.5" fill="#fff" stroke="#333" stroke-width="1.1"/>
<text x="765.9" y="634.7" font-size="7.4" fill="#231f20" stroke="none" >M</text>
<text x="884.5" y="608.1" font-size="8.3" fill="#231f20" stroke="none" textLength="46.2" lengthAdjust="spacingAndGlyphs" >GEAR PUMP</text>
<text x="884.5" y="619.1" font-size="8.3" fill="#231f20" stroke="none" textLength="46.2" lengthAdjust="spacingAndGlyphs" >33.0 CC/REV</text>
<rect x="840.3" y="719.6" width="25.8" height="20" fill="#fff" stroke="#222" stroke-width="1.1"/>
<polyline points="843.1,732.1 853,723.3 863,732.1" stroke="#231f20" stroke-width="1" />
<polyline points="843.1,732.1 863,732.1" stroke="#231f20" stroke-width="1" stroke-dasharray="4 1.6" />
<text x="869.9" y="726.5" font-size="8.3" fill="#231f20" stroke="none" textLength="34.6" lengthAdjust="spacingAndGlyphs" >SUCTION</text>
<text x="869.9" y="739.2" font-size="8.3" fill="#231f20" stroke="none" textLength="26.6" lengthAdjust="spacingAndGlyphs" >FILTER</text>
<polyline points="788.8,718.3 788.8,744.9 975.7,744.9 975.7,718.3" stroke="#333" stroke-width="1.2" />
<polyline points="963.9,634 972.6,634 972.6,649.7 963.9,649.7" stroke="#3f55a8" stroke-width="1.1" />
<rect x="955.7" y="630.2" width="24.7" height="23.4" fill="none" stroke="#222" stroke-width="1.1" stroke-dasharray="6 1.6 1.4 1.6"/>
<path d="M963.9 638.34 L967.71 641.4 L963.9 644.46 L960.09 641.4Z" stroke="#231f20" stroke-width="1.3" fill="#2b3f8f"/>
<circle cx="972.6" cy="639.8" r="1.9" fill="#fff" stroke="#231f20" stroke-width="0.9"/>
<polyline points="972.6,641.8 971.2,642.4 974,643.6 971.2,644.8 974,646 972.6,646.6" stroke="#231f20" stroke-width="0.8" />
<text x="904.7" y="644.1" font-size="8.3" fill="#231f20" stroke="none" textLength="46.1" lengthAdjust="spacingAndGlyphs" >LINE FILTER</text>
<text x="1263" y="176.3" font-size="9" fill="#231f20" stroke="none" textLength="30" lengthAdjust="spacingAndGlyphs" >&lt;STD&gt;</text>
<polyline points="1252.7,229 1314.5,229" stroke="#7586cc" stroke-width="1.3" />
<circle cx="1283.1" cy="229" r="1.7" fill="#111" stroke="none"/>
<polyline points="1242.5,267.5 1242.5,354.3 1324.8,354.3 1324.8,267.5" stroke="#e8722b" stroke-width="1.15" />
<rect x="1232" y="225.6" width="20.7" height="41.9" fill="#f58220" stroke="#222" stroke-width="1.2"/>
<rect x="1239.2" y="198.5" width="6.4" height="52.3" fill="#fff" stroke="#333" stroke-width="1"/>
<rect x="1232" y="250.8" width="20.7" height="6.1" fill="#fff" stroke="#222" stroke-width="1.1"/>
<rect x="1314.5" y="225.6" width="20.6" height="41.9" fill="#f58220" stroke="#222" stroke-width="1.2"/>
<rect x="1321.6" y="198.5" width="6.4" height="52.3" fill="#fff" stroke="#333" stroke-width="1"/>
<rect x="1314.5" y="250.8" width="20.6" height="6.1" fill="#fff" stroke="#222" stroke-width="1.1"/>
<text x="1184" y="243.9" font-size="8.3" fill="#231f20" stroke="none" textLength="42.4" lengthAdjust="spacingAndGlyphs" >STANDARD</text>
<text x="1184" y="256.9" font-size="8.3" fill="#231f20" stroke="none" textLength="39" lengthAdjust="spacingAndGlyphs" >CYLINDER</text>
<polyline points="1218.1,306.8 1267.3,306.8" stroke="#222" stroke-width="1.1" stroke-dasharray="17.5 2 1.4 2 1.4 1.6 13.5 2 1.4 2 1.4 1 4" />
<polyline points="1218.1,342.9 1267.3,342.9" stroke="#222" stroke-width="1.1" stroke-dasharray="4.4 2 1.4 2.4 15 2 1.4 2 1.4 1.8 20" />
<polyline points="1218.6,306.8 1218.6,342.9" stroke="#222" stroke-width="1.1" stroke-dasharray="9 2 1.4 2.2 1.4 2 20" />
<polyline points="1266.8,306.8 1266.8,342.9" stroke="#222" stroke-width="1.1" stroke-dasharray="16 2 1.4 2.2 1.4 2 14" />
<polyline points="1228.7,317.2 1223,317.2 1223,326.3 1242.7,326.3" stroke="#e8722b" stroke-width="1.2" stroke-dasharray="4.4 1.8" />
<polyline points="1250.6,317.2 1262.8,317.2 1262.8,336.2 1242.7,336.2" stroke="#e8722b" stroke-width="1.2" stroke-dasharray="4.4 1.8" />
<rect x="1228.7" y="312.2" width="21.9" height="10.7" fill="none" stroke="#222" stroke-width="1.1"/>
<polyline points="1234.5,312.2 1234.5,322.9" stroke="#231f20" stroke-width="0.9" />
<polyline points="1239.8,312.2 1239.8,322.9" stroke="#231f20" stroke-width="1.1" />
<path d="M1233 315.45 Q1235.4 317.4 1233 319.35 M1236 315.45 Q1233.6 317.4 1236 319.35" stroke="#231f20" stroke-width="1.1" fill="none"/>
<path d="M1241.1 329.42 Q1243.6 331.5 1241.1 333.58 M1244.3 329.42 Q1241.8 331.5 1244.3 333.58" stroke="#231f20" stroke-width="1.1" fill="none"/>
<polyline points="1250.6,316.2 1252.2,314 1253.6,316.8 1255.6,313.4 1257.2,314.8" stroke="#231f20" stroke-width="0.9" />
<text x="1163.6" y="321.8" font-size="8.3" fill="#231f20" stroke="none" textLength="21.6" lengthAdjust="spacingAndGlyphs" >FLOW</text>
<text x="1163.6" y="333.9" font-size="8.3" fill="#231f20" stroke="none" textLength="48.4" lengthAdjust="spacingAndGlyphs" >PROTECTOR</text>
<polyline points="1287,354.3 1287,482.3 1552.5,482.3 1552.5,790.3 1394.4,790.3" stroke="#e8722b" stroke-width="1.15" />
<circle cx="1287" cy="354.3" r="1.7" fill="#111" stroke="none"/>
<text x="1598" y="175.6" font-size="9" fill="#231f20" stroke="none" textLength="33.8" lengthAdjust="spacingAndGlyphs" >&lt;FFTL&gt;</text>
<polyline points="1520.2,208.8 1520.2,187.2 1627.6,187.2 1627.6,229" stroke="#2f45a0" stroke-width="1.3" />
<polyline points="1513.5,204.3 1513.5,208.8 1528.3,208.8 1528.3,204.3" stroke="#2f45a0" stroke-width="1.1" />
<polyline points="1600.7,229 1661.1,229" stroke="#e8722b" stroke-width="1.15" />
<circle cx="1627.6" cy="229" r="1.7" fill="#111" stroke="none"/>
<polyline points="1589.7,267.7 1589.7,408.7 1671.7,408.7 1671.7,267.7" stroke="#e8722b" stroke-width="1.15" />
<polyline points="1633.7,347.6 1633.7,424" stroke="#e8722b" stroke-width="1.15" />
<rect x="1579" y="225.4" width="21.7" height="42.3" fill="#f58220" stroke="#222" stroke-width="1.2"/>
<rect x="1586.6" y="198.3" width="6.6" height="52.2" fill="#fff" stroke="#333" stroke-width="1"/>
<rect x="1579" y="250.5" width="21.7" height="6.6" fill="#fff" stroke="#222" stroke-width="1.1"/>
<rect x="1661.1" y="225.4" width="21.1" height="42.3" fill="#f58220" stroke="#222" stroke-width="1.2"/>
<rect x="1668" y="198.3" width="6.7" height="52.2" fill="#fff" stroke="#333" stroke-width="1"/>
<rect x="1661.1" y="250.5" width="21.1" height="6.6" fill="#fff" stroke="#222" stroke-width="1.1"/>
<text x="1692.8" y="241.2" font-size="8.3" fill="#231f20" stroke="none" textLength="48.6" lengthAdjust="spacingAndGlyphs" >SECONDARY</text>
<text x="1692.8" y="254.2" font-size="8.3" fill="#231f20" stroke="none" textLength="39" lengthAdjust="spacingAndGlyphs" >CYLINDER</text>
<text x="1593.2" y="300.9" font-size="8.3" fill="#231f20" stroke="none" textLength="73.4" lengthAdjust="spacingAndGlyphs" >PRIMARY CYLINDER</text>
<path d="M1622.6 310.4 V347.6 H1645.4 V310.4 M1624.9 310.4 V340.7 M1643.1 310.4 V340.7" stroke="#333" stroke-width="0.9" fill="none"/>
<rect x="1625.6" y="304.4" width="16.8" height="36.3" fill="#fff" stroke="#222" stroke-width="1"/>
<rect x="1622.6" y="340.7" width="22.8" height="6.9" fill="#f58220" stroke="#222" stroke-width="1.1"/>
<polyline points="1625.6,323.6 1642.4,323.6" stroke="#231f20" stroke-width="0.9" />
<polyline points="1633.7,323.6 1633.7,340.7" stroke="#231f20" stroke-width="0.9" />
<path d="M1633.7 329.61 L1637.17 332.4 L1633.7 335.19 L1630.23 332.4Z" stroke="#231f20" stroke-width="1.3" fill="#fff"/>
<polyline points="1564.9,306.3 1614.1,306.3" stroke="#222" stroke-width="1.1" stroke-dasharray="17.5 2 1.4 2 1.4 1.6 13.5 2 1.4 2 1.4 1 4" />
<polyline points="1564.9,342.4 1614.1,342.4" stroke="#222" stroke-width="1.1" stroke-dasharray="4.4 2 1.4 2.4 15 2 1.4 2 1.4 1.8 20" />
<polyline points="1565.4,306.3 1565.4,342.4" stroke="#222" stroke-width="1.1" stroke-dasharray="9 2 1.4 2.2 1.4 2 20" />
<polyline points="1613.6,306.3 1613.6,342.4" stroke="#222" stroke-width="1.1" stroke-dasharray="16 2 1.4 2.2 1.4 2 14" />
<polyline points="1575.5,316.7 1569.8,316.7 1569.8,325.8 1589.5,325.8" stroke="#e8722b" stroke-width="1.2" stroke-dasharray="4.4 1.8" />
<polyline points="1597.4,316.7 1609.6,316.7 1609.6,335.7 1589.5,335.7" stroke="#e8722b" stroke-width="1.2" stroke-dasharray="4.4 1.8" />
<rect x="1575.5" y="311.7" width="21.9" height="10.7" fill="none" stroke="#222" stroke-width="1.1"/>
<polyline points="1581.3,311.7 1581.3,322.4" stroke="#231f20" stroke-width="0.9" />
<polyline points="1586.6,311.7 1586.6,322.4" stroke="#231f20" stroke-width="1.1" />
<path d="M1579.8 314.95 Q1582.2 316.9 1579.8 318.85 M1582.8 314.95 Q1580.4 316.9 1582.8 318.85" stroke="#231f20" stroke-width="1.1" fill="none"/>
<path d="M1587.9 328.92 Q1590.4 331 1587.9 333.08 M1591.1 328.92 Q1588.6 331 1591.1 333.08" stroke="#231f20" stroke-width="1.1" fill="none"/>
<polyline points="1597.4,315.7 1599,313.5 1600.4,316.3 1602.4,312.9 1604,314.3" stroke="#231f20" stroke-width="0.9" />
<polyline points="1609.3,361.8 1658.5,361.8" stroke="#222" stroke-width="1.1" stroke-dasharray="17.5 2 1.4 2 1.4 1.6 13.5 2 1.4 2 1.4 1 4" />
<polyline points="1609.3,397.9 1658.5,397.9" stroke="#222" stroke-width="1.1" stroke-dasharray="4.4 2 1.4 2.4 15 2 1.4 2 1.4 1.8 20" />
<polyline points="1609.8,361.8 1609.8,397.9" stroke="#222" stroke-width="1.1" stroke-dasharray="9 2 1.4 2.2 1.4 2 20" />
<polyline points="1658,361.8 1658,397.9" stroke="#222" stroke-width="1.1" stroke-dasharray="16 2 1.4 2.2 1.4 2 14" />
<polyline points="1619.9,372.2 1614.2,372.2 1614.2,381.3 1633.9,381.3" stroke="#e8722b" stroke-width="1.2" stroke-dasharray="4.4 1.8" />
<polyline points="1641.8,372.2 1654,372.2 1654,391.2 1633.9,391.2" stroke="#e8722b" stroke-width="1.2" stroke-dasharray="4.4 1.8" />
<rect x="1619.9" y="367.2" width="21.9" height="10.7" fill="none" stroke="#222" stroke-width="1.1"/>
<polyline points="1625.7,367.2 1625.7,377.9" stroke="#231f20" stroke-width="0.9" />
<polyline points="1631,367.2 1631,377.9" stroke="#231f20" stroke-width="1.1" />
<path d="M1624.2 370.45 Q1626.6 372.4 1624.2 374.35 M1627.2 370.45 Q1624.8 372.4 1627.2 374.35" stroke="#231f20" stroke-width="1.1" fill="none"/>
<path d="M1632.3 384.42 Q1634.8 386.5 1632.3 388.58 M1635.5 384.42 Q1633 386.5 1635.5 388.58" stroke="#231f20" stroke-width="1.1" fill="none"/>
<polyline points="1641.8,371.2 1643.4,369 1644.8,371.8 1646.8,368.4 1648.4,369.8" stroke="#231f20" stroke-width="0.9" />
<text x="1511.7" y="322" font-size="8.3" fill="#231f20" stroke="none" textLength="21.6" lengthAdjust="spacingAndGlyphs" >FLOW</text>
<text x="1511.7" y="334.1" font-size="8.3" fill="#231f20" stroke="none" textLength="48.4" lengthAdjust="spacingAndGlyphs" >PROTECTOR</text>
<text x="1674.7" y="376.3" font-size="8.3" fill="#231f20" stroke="none" textLength="21.6" lengthAdjust="spacingAndGlyphs" >FLOW</text>
<text x="1674.7" y="388.4" font-size="8.3" fill="#231f20" stroke="none" textLength="48.4" lengthAdjust="spacingAndGlyphs" >PROTECTOR</text>
<circle cx="1633.7" cy="408.7" r="1.7" fill="#111" stroke="none"/>
<polyline points="1709.8,472.7 1709.8,500.5" stroke="#e8722b" stroke-width="1.15" />
<polyline points="1763.5,472.7 1763.5,500.5" stroke="#e8722b" stroke-width="1.15" />
<rect x="1699.7" y="453.1" width="79.9" height="19.6" fill="#f58220" stroke="#222" stroke-width="1.5"/>
<rect x="1729.7" y="453.1" width="9.6" height="19.6" fill="#fff" stroke="#222" stroke-width="1.1"/>
<rect x="1739.8" y="460" width="66" height="5.8" fill="#fff" stroke="none"/>
<path d="M1739.3 460 H1806 l3.4 5.6 M1739.3 465.8 H1807.6" stroke="#333" stroke-width="1.1" fill="none"/>
<path d="M1805 457.9 l1.6 2.4" stroke="#333" stroke-width="1" fill="none"/>
<rect x="1699.7" y="500.5" width="79.9" height="19.9" fill="#f58220" stroke="#222" stroke-width="1.5"/>
<rect x="1729.7" y="500.5" width="9.6" height="19.9" fill="#fff" stroke="#222" stroke-width="1.1"/>
<rect x="1739.8" y="507.55" width="66" height="5.8" fill="#fff" stroke="none"/>
<path d="M1739.3 507.55 H1806 l3.4 5.6 M1739.3 513.35 H1807.6" stroke="#333" stroke-width="1.1" fill="none"/>
<path d="M1805 505.45 l1.6 2.4" stroke="#333" stroke-width="1" fill="none"/>
<text x="1704.2" y="534.9" font-size="8.3" fill="#231f20" stroke="none" textLength="62.2" lengthAdjust="spacingAndGlyphs" >TILT CYLINDERS</text>
<polyline points="1348.2,801.2 1567.4,801.2 1567.4,482.3 1709.8,482.3" stroke="#e8722b" stroke-width="1.15" />
<path d="M1328.4 811.8 H1579.4 V492.3 H1706.4 C1707.6 492.3 1707.2 495 1709.8 495 C1712.4 495 1712 492.3 1713.2 492.3 H1763.5" stroke="#e8722b" stroke-width="1.15" fill="none"/>
<circle cx="1709.8" cy="482.3" r="1.7" fill="#111" stroke="none"/>
<circle cx="1763.5" cy="492.3" r="1.7" fill="#111" stroke="none"/>
<text x="1190.8" y="526.8" font-size="9" fill="#231f20" stroke="none" textLength="166.4" lengthAdjust="spacingAndGlyphs" >MAIN HYDRAULIC CONTROL VALVE</text>
<rect x="1062.5" y="575.5" width="431.3" height="171.8" fill="none" stroke="#222" stroke-width="1.2" stroke-dasharray="16.2 2.1 1.7 2.1" stroke-dashoffset="12.2"/>
<polyline points="1197.4,575.5 1197.4,747.3" stroke="#333" stroke-width="1.2" stroke-dasharray="16.2 2.1 1.7 2.1" stroke-dashoffset="6.4" />
<polyline points="1248.7,575.5 1248.7,747.3" stroke="#333" stroke-width="1.2" stroke-dasharray="16.2 2.1 1.7 2.1" stroke-dashoffset="6.4" />
<polyline points="1354.1,575.5 1354.1,747.3" stroke="#333" stroke-width="1.2" stroke-dasharray="16.2 2.1 1.7 2.1" stroke-dashoffset="6.4" />
<polyline points="1458.4,575.5 1458.4,747.3" stroke="#333" stroke-width="1.2" stroke-dasharray="16.2 2.1 1.7 2.1" stroke-dashoffset="6.4" />
<polyline points="1115.6,591.5 1493.8,591.5" stroke="#e8722b" stroke-width="1.15" />
<polyline points="1155.5,718.3 1155.5,647.4 1411,647.4" stroke="#6c7cc7" stroke-width="1.5" />
<polyline points="1102.3,740 1444.5,740" stroke="#6c7cc7" stroke-width="1.5" />
<polyline points="1125,693.7 1353.6,693.7" stroke="#333" stroke-width="1.1" stroke-dasharray="6 2.4" />
<path d="M1140.6 583.1 L1140.6 588.5 C1140.6 589.7 1138.2 589.1 1138.2 591.5 C1138.2 593.9 1140.6 593.3 1140.6 594.5 L1140.6 653" stroke="#3f55a8" stroke-width="1.2" fill="none"/>
<path d="M1135.4 583.1 L1135.4 588.5 C1135.4 589.7 1133 589.1 1133 591.5 C1133 593.9 1135.4 593.3 1135.4 594.5 L1135.4 700" stroke="#3f55a8" stroke-width="1.2" fill="none"/>
<path d="M1135.4 700 L1135.4 715.3 C1135.4 716.5 1137.8 715.9 1137.8 718.3 C1137.8 720.7 1135.4 720.1 1135.4 721.3 L1135.4 726.3" stroke="#3f55a8" stroke-width="1.2" fill="none"/>
<polyline points="1135.4,726.3 1086.1,726.3 1086.1,709.4" stroke="#8492cf" stroke-width="1.6" />
<polyline points="1130.6,653 1163.4,653" stroke="#8492cf" stroke-width="1.7" />
<polyline points="1149.5,642.7 1163.4,642.7" stroke="#231f20" stroke-width="1.1" />
<path d="M1179.5 642.7 H1189 L1190.5 644.3" stroke="#231f20" stroke-width="1.1" fill="none"/>
<path d="M1190.5 644.3 L1190.5 737.4 C1190.5 738.6 1192.5 738 1192.5 740 C1192.5 742 1190.5 741.4 1190.5 742.6 L1190.5 750" stroke="#231f20" stroke-width="1.1" fill="none"/>
<path d="M1179.5 653 H1183.6" stroke="#231f20" stroke-width="1.1" fill="none"/>
<path d="M1183.6 653 L1183.6 737.4 C1183.6 738.6 1185.6 738 1185.6 740 C1185.6 742 1183.6 741.4 1183.6 742.6 L1183.6 750" stroke="#231f20" stroke-width="1.1" fill="none"/>
<polyline points="1149.5,591.5 1149.5,607.2" stroke="#e8722b" stroke-width="1.15" />
<polyline points="1149.5,613.2 1149.5,642.7" stroke="#231f20" stroke-width="1.1" />
<path d="M1147.4 618.17 Q1150.4 620.9 1147.4 623.63 M1151.6 618.17 Q1148.6 620.9 1151.6 623.63" stroke="#231f20" stroke-width="1.1" fill="none"/>
<polyline points="1149.5,642.7 1149.5,644.7" stroke="#231f20" stroke-width="1" />
<path d="M1149.5 644.2 C1154 645.7 1154 651.2 1149.5 652.7" stroke="#231f20" stroke-width="1" fill="none" stroke-dasharray="4 2"/>
<polyline points="1149.5,652.7 1149.5,665.4" stroke="#231f20" stroke-width="1" stroke-dasharray="4 2" />
<polyline points="1149.5,671.4 1149.5,693.7" stroke="#231f20" stroke-width="1" stroke-dasharray="4 2" />
<path d="M1149.5 607.41 L1152.97 610.2 L1149.5 612.99 L1146.03 610.2Z" stroke="#231f20" stroke-width="1.3" fill="#fff"/>
<path d="M1149.5 665.61 L1152.97 668.4 L1149.5 671.19 L1146.03 668.4Z" stroke="#231f20" stroke-width="1.3" fill="#fff"/>
<path d="M1147.4 675.47 Q1150.4 678.2 1147.4 680.93 M1151.6 675.47 Q1148.6 678.2 1151.6 680.93" stroke="#231f20" stroke-width="1.1" fill="none"/>
<circle cx="1149.5" cy="591.5" r="1.7" fill="#111" stroke="none"/>
<circle cx="1149.5" cy="642.7" r="1.7" fill="#111" stroke="none"/>
<circle cx="1149.5" cy="693.7" r="1.7" fill="#111" stroke="none"/>
<rect x="1163.4" y="616.4" width="16.1" height="62.7" fill="none" stroke="#222" stroke-width="1.2"/>
<polyline points="1163.4,637.2 1179.5,637.2" stroke="#231f20" stroke-width="1" />
<polyline points="1163.4,658.2 1179.5,658.2" stroke="#231f20" stroke-width="1" />
<polyline points="1164.9,621.2 1178,621.2" stroke="#231f20" stroke-width="0.9" />
<path d="M1178 621.2 l-3 -1.3 v2.6Z" stroke="#231f20" stroke-width="0.3" fill="#231f20"/>
<path d="M1164.9 627 H1169.85 M1169.85 625 V629 M1173.05 625 V629 M1173.05 627 H1178" stroke="#231f20" stroke-width="0.9" fill="none"/>
<polyline points="1164.9,631.8 1178,631.8" stroke="#231f20" stroke-width="0.9" />
<path d="M1164.9 631.8 l3 -1.3 v2.6Z" stroke="#231f20" stroke-width="0.3" fill="#231f20"/>
<path d="M1163.4 642.6 H1169.85 M1169.85 640.6 V644.6 M1173.05 640.6 V644.6 M1173.05 642.6 H1179.5" stroke="#231f20" stroke-width="0.9" fill="none"/>
<path d="M1163.4 653 H1169.85 M1169.85 651 V655 M1173.05 651 V655 M1173.05 653 H1179.5" stroke="#231f20" stroke-width="0.9" fill="none"/>
<path d="M1163.4 662.8 H1167.4 L1175.5 674 H1179.5 M1163.4 674 H1167.4 L1175.5 662.8 H1179.5" stroke="#231f20" stroke-width="0.9" fill="none"/>
<polyline points="1163.4,668.4 1167,668.4" stroke="#231f20" stroke-width="0.9" />
<polyline points="1175.9,668.4 1179.5,668.4" stroke="#231f20" stroke-width="0.9" />
<polyline points="1165.6,606 1177.5,606" stroke="#231f20" stroke-width="1.1" />
<polyline points="1170.8,606 1170.8,616.4" stroke="#231f20" stroke-width="1.1" />
<circle cx="1179.7" cy="606" r="2.1" fill="#fff" stroke="#231f20" stroke-width="0.9"/>
<polyline points="1170.8,609.8 1174.4,612.4 1171.8,613.8 1174.8,615.8" stroke="#231f20" stroke-width="0.9" />
<polyline points="1175.05,680.3 1168.45,681.9 1174.65,683.3 1168.25,685.1 1174.25,686.7" stroke="#231f20" stroke-width="0.9" />
<circle cx="1135.4" cy="653" r="1.7" fill="#111" stroke="none"/>
<circle cx="1140.6" cy="653" r="1.7" fill="#111" stroke="none"/>
<circle cx="1140.6" cy="583.1" r="1.7" fill="#111" stroke="none"/>
<circle cx="1178.6" cy="653" r="1.4" fill="#111" stroke="none"/>
<path d="M1204.2 583.1 V649 C1204.2 652 1205 653 1208 653 H1218.4" stroke="#3f55a8" stroke-width="1.2" fill="none"/>
<polyline points="1210.4,642.7 1218.4,642.7" stroke="#231f20" stroke-width="1.1" />
<path d="M1234.6 642.7 H1244.4 L1245.8 644.3" stroke="#231f20" stroke-width="1.1" fill="none"/>
<path d="M1245.8 644.3 L1245.8 737.4 C1245.8 738.6 1247.8 738 1247.8 740 C1247.8 742 1245.8 741.4 1245.8 742.6 L1245.8 750" stroke="#231f20" stroke-width="1.1" fill="none"/>
<path d="M1234.6 653 H1238.6" stroke="#231f20" stroke-width="1.1" fill="none"/>
<path d="M1238.6 653 L1238.6 737.4 C1238.6 738.6 1240.6 738 1240.6 740 C1240.6 742 1238.6 741.4 1238.6 742.6 L1238.6 750" stroke="#231f20" stroke-width="1.1" fill="none"/>
<polyline points="1210.4,591.5 1210.4,607.2" stroke="#e8722b" stroke-width="1.15" />
<polyline points="1210.4,613.2 1210.4,642.7" stroke="#231f20" stroke-width="1.1" />
<path d="M1208.3 618.17 Q1211.3 620.9 1208.3 623.63 M1212.5 618.17 Q1209.5 620.9 1212.5 623.63" stroke="#231f20" stroke-width="1.1" fill="none"/>
<polyline points="1210.4,642.7 1210.4,644.7" stroke="#231f20" stroke-width="1" />
<path d="M1210.4 644.2 C1214.9 645.7 1214.9 651.2 1210.4 652.7" stroke="#231f20" stroke-width="1" fill="none" stroke-dasharray="4 2"/>
<polyline points="1210.4,652.7 1210.4,665.4" stroke="#231f20" stroke-width="1" stroke-dasharray="4 2" />
<polyline points="1210.4,671.4 1210.4,693.7" stroke="#231f20" stroke-width="1" stroke-dasharray="4 2" />
<path d="M1210.4 607.41 L1213.87 610.2 L1210.4 612.99 L1206.93 610.2Z" stroke="#231f20" stroke-width="1.3" fill="#fff"/>
<path d="M1210.4 665.61 L1213.87 668.4 L1210.4 671.19 L1206.93 668.4Z" stroke="#231f20" stroke-width="1.3" fill="#fff"/>
<path d="M1208.3 675.47 Q1211.3 678.2 1208.3 680.93 M1212.5 675.47 Q1209.5 678.2 1212.5 680.93" stroke="#231f20" stroke-width="1.1" fill="none"/>
<circle cx="1210.4" cy="591.5" r="1.7" fill="#111" stroke="none"/>
<circle cx="1210.4" cy="642.7" r="1.7" fill="#111" stroke="none"/>
<circle cx="1210.4" cy="693.7" r="1.7" fill="#111" stroke="none"/>
<rect x="1218.4" y="616.4" width="16.2" height="62.7" fill="none" stroke="#222" stroke-width="1.2"/>
<polyline points="1218.4,637.2 1234.6,637.2" stroke="#231f20" stroke-width="1" />
<polyline points="1218.4,658.2 1234.6,658.2" stroke="#231f20" stroke-width="1" />
<polyline points="1219.9,621.2 1233.1,621.2" stroke="#231f20" stroke-width="0.9" />
<path d="M1233.1 621.2 l-3 -1.3 v2.6Z" stroke="#231f20" stroke-width="0.3" fill="#231f20"/>
<path d="M1219.9 627 H1224.9 M1224.9 625 V629 M1228.1 625 V629 M1228.1 627 H1233.1" stroke="#231f20" stroke-width="0.9" fill="none"/>
<polyline points="1219.9,631.8 1233.1,631.8" stroke="#231f20" stroke-width="0.9" />
<path d="M1219.9 631.8 l3 -1.3 v2.6Z" stroke="#231f20" stroke-width="0.3" fill="#231f20"/>
<path d="M1218.4 642.6 H1224.9 M1224.9 640.6 V644.6 M1228.1 640.6 V644.6 M1228.1 642.6 H1234.6" stroke="#231f20" stroke-width="0.9" fill="none"/>
<path d="M1218.4 653 H1224.9 M1224.9 651 V655 M1228.1 651 V655 M1228.1 653 H1234.6" stroke="#231f20" stroke-width="0.9" fill="none"/>
<path d="M1218.4 662.8 H1222.4 L1230.6 674 H1234.6 M1218.4 674 H1222.4 L1230.6 662.8 H1234.6" stroke="#231f20" stroke-width="0.9" fill="none"/>
<polyline points="1218.4,668.4 1222,668.4" stroke="#231f20" stroke-width="0.9" />
<polyline points="1231,668.4 1234.6,668.4" stroke="#231f20" stroke-width="0.9" />
<polyline points="1220.6,606 1232.6,606" stroke="#231f20" stroke-width="1.1" />
<polyline points="1225.8,606 1225.8,616.4" stroke="#231f20" stroke-width="1.1" />
<circle cx="1234.8" cy="606" r="2.1" fill="#fff" stroke="#231f20" stroke-width="0.9"/>
<polyline points="1225.8,609.8 1229.4,612.4 1226.8,613.8 1229.8,615.8" stroke="#231f20" stroke-width="0.9" />
<polyline points="1230.1,680.3 1223.5,681.9 1229.7,683.3 1223.3,685.1 1229.3,686.7" stroke="#231f20" stroke-width="0.9" />
<circle cx="1204.2" cy="583.1" r="1.7" fill="#111" stroke="none"/>
<path d="M1255.8 583.1 L1255.8 588.5 C1255.8 589.7 1253.4 589.1 1253.4 591.5 C1253.4 593.9 1255.8 593.3 1255.8 594.5 L1255.8 644.4 C1255.8 645.6 1253.4 645 1253.4 647.4 C1253.4 649.8 1255.8 649.2 1255.8 650.4 L1255.8 651.8" stroke="#3f55a8" stroke-width="1.2" fill="none"/>
<polyline points="1255.8,651.8 1285,651.8" stroke="#3f55a8" stroke-width="1.2" />
<polyline points="1265.5,642.7 1285,642.7" stroke="#231f20" stroke-width="1.1" />
<polyline points="1296,642.7 1348.2,642.7" stroke="#e8722b" stroke-width="1.15" />
<path d="M1348.2 642.7 L1348.2 644.6 C1348.2 645.8 1350.4 645.2 1350.4 647.4 C1350.4 649.6 1348.2 649 1348.2 650.2 L1348.2 737.2 C1348.2 738.4 1350.4 737.8 1350.4 740 C1350.4 742.2 1348.2 741.6 1348.2 742.8 L1348.2 801.2" stroke="#e8722b" stroke-width="1.15" fill="none"/>
<polyline points="1296,651.8 1328.5,651.8" stroke="#e8722b" stroke-width="1.15" />
<path d="M1328.5 651.8 L1328.5 737.2 C1328.5 738.4 1330.7 737.8 1330.7 740 C1330.7 742.2 1328.5 741.6 1328.5 742.8 L1328.5 811.8" stroke="#e8722b" stroke-width="1.15" fill="none"/>
<path d="M1296 655.2 H1304.7 V720.9 H1308.4 M1319 720.9 H1328.5" stroke="#231f20" stroke-width="1.1" fill="none"/>
<path d="M1255.8 651.8 V688 C1255.8 692 1252.5 692 1252.5 693.7 C1252.5 695.4 1256.3 695.4 1256.3 699 V735.4 H1315.5 V726.2" stroke="#27a548" stroke-width="1.15" fill="none" stroke-dasharray="6.2 1.7"/>
<path d="M1277.7 642.7 C1281.6 645 1281 651.8 1278.2 653 V688 C1278.2 692 1275 692 1275 693.7 C1275 695.4 1279 695.6 1280 698.2 H1313.4 V705.4" stroke="#27a548" stroke-width="1.15" fill="none" stroke-dasharray="6.2 1.7"/>
<polyline points="1265.5,591.5 1265.5,607.1" stroke="#e8722b" stroke-width="1.15" />
<polyline points="1265.5,613.1 1265.5,642.7" stroke="#231f20" stroke-width="1.1" />
<path d="M1263.4 618.17 Q1266.4 620.9 1263.4 623.63 M1267.6 618.17 Q1264.6 620.9 1267.6 623.63" stroke="#231f20" stroke-width="1.1" fill="none"/>
<polyline points="1265.5,642.7 1265.5,644.7" stroke="#231f20" stroke-width="1" />
<path d="M1265.5 644.2 C1270 645.7 1270 651.2 1265.5 652.7" stroke="#231f20" stroke-width="1" fill="none" stroke-dasharray="4 2"/>
<polyline points="1265.5,652.7 1265.5,665" stroke="#231f20" stroke-width="1" stroke-dasharray="4 2" />
<polyline points="1265.5,671 1265.5,693.7" stroke="#231f20" stroke-width="1" stroke-dasharray="4 2" />
<path d="M1265.5 607.31 L1268.97 610.1 L1265.5 612.89 L1262.03 610.1Z" stroke="#231f20" stroke-width="1.3" fill="#fff"/>
<path d="M1265.5 665.21 L1268.97 668 L1265.5 670.79 L1262.03 668Z" stroke="#231f20" stroke-width="1.3" fill="#fff"/>
<path d="M1263.4 675.47 Q1266.4 678.2 1263.4 680.93 M1267.6 675.47 Q1264.6 678.2 1267.6 680.93" stroke="#231f20" stroke-width="1.1" fill="none"/>
<circle cx="1265.5" cy="591.5" r="1.7" fill="#111" stroke="none"/>
<circle cx="1265.5" cy="642.7" r="1.7" fill="#111" stroke="none"/>
<circle cx="1265.5" cy="693.7" r="1.7" fill="#111" stroke="none"/>
<rect x="1285" y="617.4" width="15.8" height="62.3" fill="none" stroke="#222" stroke-width="1.2"/>
<polyline points="1285,638.2 1300.8,638.2" stroke="#231f20" stroke-width="1" />
<polyline points="1285,659.2 1300.8,659.2" stroke="#231f20" stroke-width="1" />
<polyline points="1289.5,623 1300.8,623" stroke="#231f20" stroke-width="0.9" />
<polyline points="1295.8,623 1294.4,632.8 1300.8,632.8" stroke="#231f20" stroke-width="0.9" />
<polyline points="1288,635 1292.6,623.4" stroke="#231f20" stroke-width="0.9" />
<polyline points="1289.6,626.6 1292.4,626.6" stroke="#231f20" stroke-width="0.9" />
<polyline points="1296.8,627.6 1300.8,627.6" stroke="#231f20" stroke-width="0.9" />
<path d="M1285 642.8 H1291.3 M1291.3 640.8 V644.8 M1294.5 640.8 V644.8 M1294.5 642.8 H1300.8" stroke="#231f20" stroke-width="0.9" fill="none"/>
<path d="M1285 651.8 H1291.3 M1291.3 649.8 V653.8 M1294.5 649.8 V653.8 M1294.5 651.8 H1300.8" stroke="#231f20" stroke-width="0.9" fill="none"/>
<path d="M1285 663.8 H1289 L1296.8 675 H1300.8 M1285 675 H1289 L1296.8 663.8 H1300.8" stroke="#231f20" stroke-width="0.9" fill="none"/>
<polyline points="1285,669.4 1288.6,669.4" stroke="#231f20" stroke-width="0.9" />
<polyline points="1297.2,669.4 1300.8,669.4" stroke="#231f20" stroke-width="0.9" />
<polyline points="1287.2,607 1298.8,607" stroke="#231f20" stroke-width="1.1" />
<polyline points="1292.4,607 1292.4,617.4" stroke="#231f20" stroke-width="1.1" />
<circle cx="1301" cy="607" r="2.1" fill="#fff" stroke="#231f20" stroke-width="0.9"/>
<polyline points="1292.4,610.8 1296,613.4 1293.4,614.8 1296.4,616.8" stroke="#231f20" stroke-width="0.9" />
<polyline points="1296.5,680.9 1289.9,682.5 1296.1,683.9 1289.7,685.7 1295.7,687.3" stroke="#231f20" stroke-width="0.9" />
<circle cx="1255.8" cy="583.1" r="1.7" fill="#111" stroke="none"/>
<circle cx="1255.8" cy="651.8" r="1.7" fill="#111" stroke="none"/>
<circle cx="1277.7" cy="642.7" r="1.7" fill="#111" stroke="none"/>
<rect x="1308.4" y="705.4" width="10.6" height="20.8" fill="#fff" stroke="#222" stroke-width="1.1"/>
<rect x="1312.2" y="702.2" width="2.8" height="3.2" fill="#fff" stroke="#222" stroke-width="0.8"/>
<polyline points="1308.4,715.8 1319,715.8" stroke="#231f20" stroke-width="0.9" />
<polyline points="1310,710.4 1317.4,710.4" stroke="#231f20" stroke-width="0.9" />
<path d="M1308.4 720.9 H1312 M1312 719.2 V722.6 M1315.4 719.2 V722.6 M1315.4 720.9 H1319" stroke="#231f20" stroke-width="0.9" fill="none"/>
<path d="M1312.6 727 l3.4 3.6 l-0.4 -3Z" stroke="#231f20" stroke-width="0.5" fill="#231f20"/>
<path d="M1351.4 690.84 Q1354.5 693.7 1351.4 696.56 M1355.8 690.84 Q1352.7 693.7 1355.8 696.56" stroke="#231f20" stroke-width="1.1" fill="none"/>
<path d="M1364.2 583.1 L1364.2 588.5 C1364.2 589.7 1361.8 589.1 1361.8 591.5 C1361.8 593.9 1364.2 593.3 1364.2 594.5 L1364.2 644.4 C1364.2 645.6 1361.8 645 1361.8 647.4 C1361.8 649.8 1364.2 649.2 1364.2 650.4 L1364.2 654.2" stroke="#3f55a8" stroke-width="1.2" fill="none"/>
<path d="M1364.2 654.2 H1376 L1389.3 641.6 H1444.5 V740" stroke="#3f55a8" stroke-width="1.2" fill="none"/>
<path d="M1410.7 583.1 L1410.7 638.6 C1410.7 639.8 1413.1 639.2 1413.1 641.6 C1413.1 644 1410.7 643.4 1410.7 644.6 L1410.7 647.4" stroke="#3f55a8" stroke-width="1.2" fill="none"/>
<polyline points="1369.5,591.5 1369.5,607.8" stroke="#e8722b" stroke-width="1.15" />
<polyline points="1369.5,614 1369.5,641.4 1374.6,641.4" stroke="#231f20" stroke-width="1.1" />
<path d="M1369.5 608.11 L1372.97 610.9 L1369.5 613.69 L1366.03 610.9Z" stroke="#231f20" stroke-width="1.3" fill="#fff"/>
<circle cx="1369.5" cy="591.5" r="1.7" fill="#111" stroke="none"/>
<circle cx="1364.2" cy="583.1" r="1.7" fill="#111" stroke="none"/>
<circle cx="1410.7" cy="583.1" r="1.7" fill="#111" stroke="none"/>
<polyline points="1384.8,654.3 1410.7,654.3 1410.7,676.2" stroke="#e8722b" stroke-width="1.15" />
<path d="M1394.4 654.3 L1394.4 737.2 C1394.4 738.4 1392.2 737.8 1392.2 740 C1392.2 742.2 1394.4 741.6 1394.4 742.8 L1394.4 790.3" stroke="#e8722b" stroke-width="1.15" fill="none"/>
<polyline points="1410.7,663.4 1437.6,663.4 1437.6,692.9 1424,692.9" stroke="#e8722b" stroke-width="1.2" stroke-dasharray="5 2" />
<rect x="1374.6" y="618.2" width="16.1" height="62.1" fill="none" stroke="#222" stroke-width="1.2"/>
<polyline points="1374.6,636.6 1390.7,636.6" stroke="#231f20" stroke-width="1" />
<polyline points="1374.6,638.4 1390.7,638.4" stroke="#231f20" stroke-width="1" />
<polyline points="1374.6,656.4 1390.7,656.4" stroke="#231f20" stroke-width="1" />
<path d="M1378 624.4 H1381 M1379.5 622.8 V626 M1385 624.4 H1390.7 M1385 622.8 V626 M1378 630.6 H1381 M1379.5 629 V632.2 M1385 630.6 H1390.7 M1385 629 V632.2" stroke="#231f20" stroke-width="0.9" fill="none"/>
<rect x="1379.4" y="632.6" width="6.8" height="4" fill="#fff" stroke="#231f20" stroke-width="0.8"/>
<path d="M1381 634.6 H1384.6 M1382.8 633 V636.4" stroke="#231f20" stroke-width="0.8" fill="none"/>
<path d="M1374.6 641.4 H1379.6 V644 M1384.8 652.6 V656 M1376 654.2 L1389.3 641.6" stroke="#231f20" stroke-width="0.9" fill="none"/>
<path d="M1378 661 H1381 M1384.4 661 H1390.7 M1378 674.6 H1381 M1384.4 674.6 H1387.4 M1386 659 L1380 676.6 M1382 666 H1387" stroke="#231f20" stroke-width="0.9" fill="none"/>
<polyline points="1376.8,607.8 1387.7,607.8" stroke="#231f20" stroke-width="1.1" />
<polyline points="1382,607.8 1382,618.2" stroke="#231f20" stroke-width="1.1" />
<circle cx="1389.9" cy="607.8" r="2.1" fill="#fff" stroke="#231f20" stroke-width="0.9"/>
<polyline points="1382,611.6 1385.6,614.2 1383,615.6 1386,617.6" stroke="#231f20" stroke-width="0.9" />
<polyline points="1386.25,681.5 1379.65,683.1 1385.85,684.5 1379.45,686.3 1385.45,687.9" stroke="#231f20" stroke-width="0.9" />
<circle cx="1394.2" cy="654.3" r="1.7" fill="#111" stroke="none"/>
<circle cx="1410.7" cy="663.4" r="1.5" fill="#111" stroke="none"/>
<rect x="1405.3" y="670.6" width="21.7" height="10.9" fill="#fff" stroke="#222" stroke-width="1.1"/>
<polyline points="1416,670.6 1416,681.5" stroke="#231f20" stroke-width="0.9" />
<polyline points="1421.9,670.6 1421.9,681.5" stroke="#231f20" stroke-width="0.9" />
<polyline points="1419,672.6 1419,679.6" stroke="#231f20" stroke-width="0.8" />
<polyline points="1410.7,670.6 1410.7,674.6" stroke="#e8722b" stroke-width="1.2" />
<circle cx="1410.7" cy="676.2" r="1.5" fill="#fff" stroke="#231f20" stroke-width="0.8"/>
<polyline points="1401,673.2 1402.4,678.6 1403.4,674.4 1404.4,678.6 1405.3,675.6" stroke="#231f20" stroke-width="0.8" />
<rect x="1427" y="673.6" width="3" height="5.2" fill="#fff" stroke="#231f20" stroke-width="0.8"/>
<polyline points="1427.4,678 1429.6,674.4" stroke="#231f20" stroke-width="0.7" />
<polyline points="1410.7,681.5 1410.7,692.9" stroke="#27a548" stroke-width="1.15" stroke-dasharray="4 1.8" />
<path d="M1367.3 692.9 L1391.8 692.9 C1393 692.9 1392.4 690.9 1394.4 690.9 C1396.4 690.9 1395.8 692.9 1397 692.9 L1417 692.9" stroke="#27a548" stroke-width="1.15" fill="none" stroke-dasharray="6.2 1.7"/>
<polyline points="1367.3,692.9 1367.3,719.6 1415.6,719.6 1415.6,700.2 1394.2,700.2" stroke="#27a548" stroke-width="1.15" stroke-dasharray="6.2 1.7" />
<polyline points="1367.3,708.7 1389.3,708.7" stroke="#27a548" stroke-width="1.15" stroke-dasharray="6.2 1.7" />
<polyline points="1410.5,708.7 1415.6,708.7" stroke="#27a548" stroke-width="1.15" />
<path d="M1417.4 689.8 V696 L1423.6 689.8 V696Z M1420.5 692.9 V688.6 M1418.6 688.6 H1422.4" stroke="#231f20" stroke-width="0.9" fill="#fff"/>
<circle cx="1410.7" cy="692.9" r="1.7" fill="#111" stroke="none"/>
<rect x="1389.3" y="703.2" width="21.2" height="11.1" fill="#fff" stroke="#222" stroke-width="1.2"/>
<polyline points="1399.9,703.2 1399.9,714.3" stroke="#231f20" stroke-width="1" />
<polyline points="1405.2,705.4 1405.2,712.2" stroke="#231f20" stroke-width="0.8" />
<path d="M1394.3 703.2 V706.6 M1394.3 714.3 V710.8" stroke="#231f20" stroke-width="0.9" fill="none"/>
<path d="M1394.3 706.99 L1396.43 708.7 L1394.3 710.41 L1392.17 708.7Z" stroke="#231f20" stroke-width="1.3" fill="#fff"/>
<rect x="1386.6" y="706.4" width="2.7" height="4.8" fill="#fff" stroke="#231f20" stroke-width="0.8"/>
<rect x="1410.5" y="706.4" width="2.5" height="4.8" fill="#fff" stroke="#231f20" stroke-width="0.8"/>
<circle cx="1394.2" cy="700.2" r="1.7" fill="#111" stroke="none"/>
<circle cx="1394.2" cy="719.6" r="1.7" fill="#111" stroke="none"/>
<path d="M1386.8 717.53 L1389.38 719.6 L1386.8 721.67 L1384.22 719.6Z" stroke="#231f20" stroke-width="1.3" fill="#fff"/>
<path d="M1377 717.6 Q1379.6 720.5 1382.2 717.6 M1377 721.6 Q1379.6 718.7 1382.2 721.6" stroke="#231f20" stroke-width="1.1" fill="none"/>
<polyline points="1115.6,627 1124.7,627 1124.7,637.2" stroke="#e8722b" stroke-width="1.2" stroke-dasharray="4 1.8" />
<polyline points="1115.6,653 1109.4,653 1109.4,658.4" stroke="#e8722b" stroke-width="1.15" />
<polyline points="1115.6,653 1119.5,653" stroke="#e8722b" stroke-width="1.15" />
<polyline points="1109.4,663.4 1109.4,667.4 1115.7,667.4" stroke="#3f55a8" stroke-width="1.2" />
<path d="M1115.7 663.4 L1115.7 675.1 C1115.7 676.3 1117.7 675.7 1117.7 677.5 C1117.7 679.3 1115.7 678.7 1115.7 679.9 L1115.7 679.8 C1115.7 681 1117.7 680.4 1117.7 682.2 C1117.7 684 1115.7 683.4 1115.7 684.6 L1115.7 718.3" stroke="#3f55a8" stroke-width="1.2" fill="none"/>
<polyline points="1115.7,718.3 1155.5,718.3" stroke="#8492cf" stroke-width="1.6" />
<polyline points="1115.7,653 1115.7,658.4" stroke="#e8722b" stroke-width="1.15" />
<rect x="1119.5" y="637.2" width="11.1" height="20.7" fill="#fff" stroke="#222" stroke-width="1.1"/>
<polyline points="1119.5,647.5 1130.6,647.5" stroke="#231f20" stroke-width="0.9" />
<polyline points="1121.2,642.4 1129,642.4" stroke="#231f20" stroke-width="0.9" />
<path d="M1129 642.4 l-2.6 -1.1 v2.2Z" stroke="#231f20" stroke-width="0.3" fill="#231f20"/>
<path d="M1119.5 653 H1123.45 M1123.45 651 V655 M1126.65 651 V655 M1126.65 653 H1130.6" stroke="#231f20" stroke-width="0.9" fill="none"/>
<polyline points="1119.8,659.4 1123.4,660.8 1120,662.2 1123.6,663.4" stroke="#231f20" stroke-width="0.8" />
<path d="M1107.5 658.43 Q1110.3 660.9 1107.5 663.37 M1111.3 658.43 Q1108.5 660.9 1111.3 663.37" stroke="#231f20" stroke-width="1.1" fill="none"/>
<path d="M1113.8 658.43 Q1116.6 660.9 1113.8 663.37 M1117.6 658.43 Q1114.8 660.9 1117.6 663.37" stroke="#231f20" stroke-width="1.1" fill="none"/>
<circle cx="1115.6" cy="591.5" r="1.7" fill="#111" stroke="none"/>
<circle cx="1115.6" cy="627" r="1.7" fill="#111" stroke="none"/>
<circle cx="1115.6" cy="653" r="1.7" fill="#111" stroke="none"/>
<polyline points="1124.8,657.9 1124.8,709.4 1115.7,709.4" stroke="#8492cf" stroke-width="1.6" />
<path d="M1122.9 698.73 Q1125.7 701.2 1122.9 703.67 M1126.7 698.73 Q1123.9 701.2 1126.7 703.67" stroke="#231f20" stroke-width="1.1" fill="none"/>
<circle cx="1124.8" cy="677.5" r="1.7" fill="#111" stroke="none"/>
<circle cx="1124.8" cy="682.2" r="1.7" fill="#111" stroke="none"/>
<circle cx="1124.8" cy="693.7" r="1.7" fill="#111" stroke="none"/>
<circle cx="1115.7" cy="709.4" r="1.7" fill="#111" stroke="none"/>
<polyline points="1124.8,677.5 1075.6,677.5 1075.6,704.6 1081.2,704.6" stroke="#3f55a8" stroke-width="1.2" />
<polyline points="1124.8,682.2 1094.4,682.2 1094.4,704.6 1096.6,704.6" stroke="#3f55a8" stroke-width="1.2" />
<polyline points="1086.1,677.5 1086.1,688.6" stroke="#3f55a8" stroke-width="1.2" stroke-dasharray="3 2" />
<path d="M1102.2 709.4 L1102.2 723.7 C1102.2 724.9 1104.2 724.3 1104.2 726.3 C1104.2 728.3 1102.2 727.7 1102.2 728.9 L1102.2 740" stroke="#8492cf" stroke-width="1.6" fill="none"/>
<polyline points="1107.5,704.6 1110,704.6" stroke="#8492cf" stroke-width="1.6" />
<path d="M1110 704.6 L1110 723.7 C1110 724.9 1112 724.3 1112 726.3 C1112 728.3 1110 727.7 1110 728.9 L1110 740" stroke="#8492cf" stroke-width="1.6" fill="none"/>
<rect x="1081.2" y="688.6" width="10.3" height="20.8" fill="#fff" stroke="#222" stroke-width="1.1"/>
<polyline points="1081.2,698.8 1091.5,698.8" stroke="#231f20" stroke-width="0.9" />
<polyline points="1082.8,693.6 1089.9,693.6" stroke="#231f20" stroke-width="0.9" />
<path d="M1089.9 693.6 l-2.6 -1.1 v2.2Z" stroke="#231f20" stroke-width="0.3" fill="#231f20"/>
<path d="M1081.2 704.6 H1084.75 M1084.75 702.6 V706.6 M1087.95 702.6 V706.6 M1087.95 704.6 H1091.5" stroke="#231f20" stroke-width="0.9" fill="none"/>
<path d="M1082.4 710.4 l3 3.6 l-4 -1.2 l3.6 -1" stroke="#231f20" stroke-width="0.8" fill="none"/>
<rect x="1096.6" y="688.6" width="10.9" height="20.8" fill="#fff" stroke="#222" stroke-width="1.1"/>
<polyline points="1096.6,698.8 1107.5,698.8" stroke="#231f20" stroke-width="0.9" />
<polyline points="1098.2,693.6 1105.9,693.6" stroke="#231f20" stroke-width="0.9" />
<path d="M1105.9 693.6 l-2.6 -1.1 v2.2Z" stroke="#231f20" stroke-width="0.3" fill="#231f20"/>
<path d="M1096.6 704.6 H1100.45 M1100.45 702.6 V706.6 M1103.65 702.6 V706.6 M1103.65 704.6 H1107.5" stroke="#231f20" stroke-width="0.9" fill="none"/>
<path d="M1097.8 710.4 l3 3.6 l-4 -1.2 l3.6 -1" stroke="#231f20" stroke-width="0.8" fill="none"/>
<circle cx="1086.1" cy="677.5" r="1.7" fill="#111" stroke="none"/>
<circle cx="1102.2" cy="682.2" r="1.7" fill="#111" stroke="none"/>
<circle cx="1110" cy="740" r="1.7" fill="#111" stroke="none"/>
<text x="1073.2" y="603.6" font-size="8.3" fill="#231f20" stroke="none" textLength="39.8" lengthAdjust="spacingAndGlyphs" >Hydrostator</text>
<path d="M1073.2 606.4 H1113 L1121.8 635.4" stroke="#231f20" stroke-width="0.9" fill="none"/>
<text x="1282" y="563.6" font-size="8.3" fill="#231f20" stroke="none" textLength="63.2" lengthAdjust="spacingAndGlyphs" >Flow regulator V/V</text>
<path d="M1281.6 566 H1348.6 L1380.6 629" stroke="#231f20" stroke-width="0.9" fill="none"/>
<text x="1332.9" y="550.9" font-size="8.3" fill="#231f20" stroke="none" textLength="57.2" lengthAdjust="spacingAndGlyphs" >Solenoid V/V "B"</text>
<path d="M1332.4 553.2 H1390.4 L1410.6 666.2" stroke="#231f20" stroke-width="0.9" fill="none"/>
<text x="1003.5" y="739.9" font-size="8.3" fill="#231f20" stroke="none" textLength="53.8" lengthAdjust="spacingAndGlyphs" >Main Relief V/V</text>
<path d="M1058.7 734.4 L1081.2 709.6" stroke="#231f20" stroke-width="0.9" fill="none"/>
<text x="1024.7" y="761.8" font-size="8.3" fill="#231f20" stroke="none" textLength="52.2" lengthAdjust="spacingAndGlyphs" >AUX Relief V/V</text>
<path d="M1066.2 750.2 L1096.8 709.6" stroke="#231f20" stroke-width="0.9" fill="none"/>
<text x="1262.6" y="777" font-size="8.3" fill="#231f20" stroke="none" textLength="42.8" lengthAdjust="spacingAndGlyphs" >Tilt Lock V/V</text>
<path d="M1275.4 768.8 L1308.2 727.4" stroke="#231f20" stroke-width="0.9" fill="none"/>
<text x="1367" y="799.1" font-size="8.3" fill="#231f20" stroke="none" textLength="42.8" lengthAdjust="spacingAndGlyphs" >Lift Lock V/V</text>
<path d="M1367 795.2 H1351.4 L1393.8 717" stroke="#231f20" stroke-width="0.9" fill="none"/>
<text x="1155.2" y="730" font-size="8.3" fill="#231f20" stroke="none" textLength="19.8" lengthAdjust="spacingAndGlyphs" >AUX2</text>
<text x="1211.8" y="730" font-size="8.3" fill="#231f20" stroke="none" textLength="19.8" lengthAdjust="spacingAndGlyphs" >AUX1</text>
<text x="1277.5" y="729" font-size="8.3" fill="#231f20" stroke="none" >Tilt</text>
<text x="1403" y="738.1" font-size="8.3" fill="#231f20" stroke="none" >Lift</text>
<text x="1175.8" y="757" font-size="8" fill="#231f20" stroke="none" >4A</text>
<text x="1191.4" y="757" font-size="8" fill="#231f20" stroke="none" >4B</text>
<text x="1231.5" y="757" font-size="8" fill="#231f20" stroke="none" >3A</text>
<text x="1247" y="757" font-size="8" fill="#231f20" stroke="none" >3B</text>
<text x="1317" y="757" font-size="8" fill="#231f20" stroke="none" >2A</text>
<text x="1337.3" y="757" font-size="8" fill="#231f20" stroke="none" >2B</text>
<text x="1383.6" y="757" font-size="8" fill="#231f20" stroke="none" >1A</text>
<text x="1088" y="768.9" font-size="8.3" fill="#231f20" stroke="none" textLength="78.2" lengthAdjust="spacingAndGlyphs" >2-SECTION : A175144</text>
<text x="1088" y="779" font-size="8.3" fill="#231f20" stroke="none" textLength="78.2" lengthAdjust="spacingAndGlyphs" >3-SECTION : A175145</text>
<text x="1088" y="788.9" font-size="8.3" fill="#231f20" stroke="none" textLength="78.2" lengthAdjust="spacingAndGlyphs" >4-SECTION : A175146</text>
<text x="987.9" y="804" font-size="8.3" fill="#231f20" stroke="none" textLength="198.1" lengthAdjust="spacingAndGlyphs" >MAIN RELIEF PRESSURE 4.0TON : 190 (+2.5/-2.5) BAR</text>
<text x="1083.5" y="814.9" font-size="8.3" fill="#231f20" stroke="none" textLength="102.5" lengthAdjust="spacingAndGlyphs" >4.5TON : 210 (+2.5/-2.5) BAR</text>
<text x="1083.5" y="825.7" font-size="8.3" fill="#231f20" stroke="none" textLength="91.7" lengthAdjust="spacingAndGlyphs" >5.0TON : 230 (+0/+5) BAR</text>
<text x="985.5" y="836.9" font-size="8.3" fill="#231f20" stroke="none" textLength="253.6" lengthAdjust="spacingAndGlyphs" >SECONDARY RELIEF PRESSURE 4.0/4.5/5.0TON : 155 (+3.5/-3.5) BAR</text>
</svg>
</body>
</html>
